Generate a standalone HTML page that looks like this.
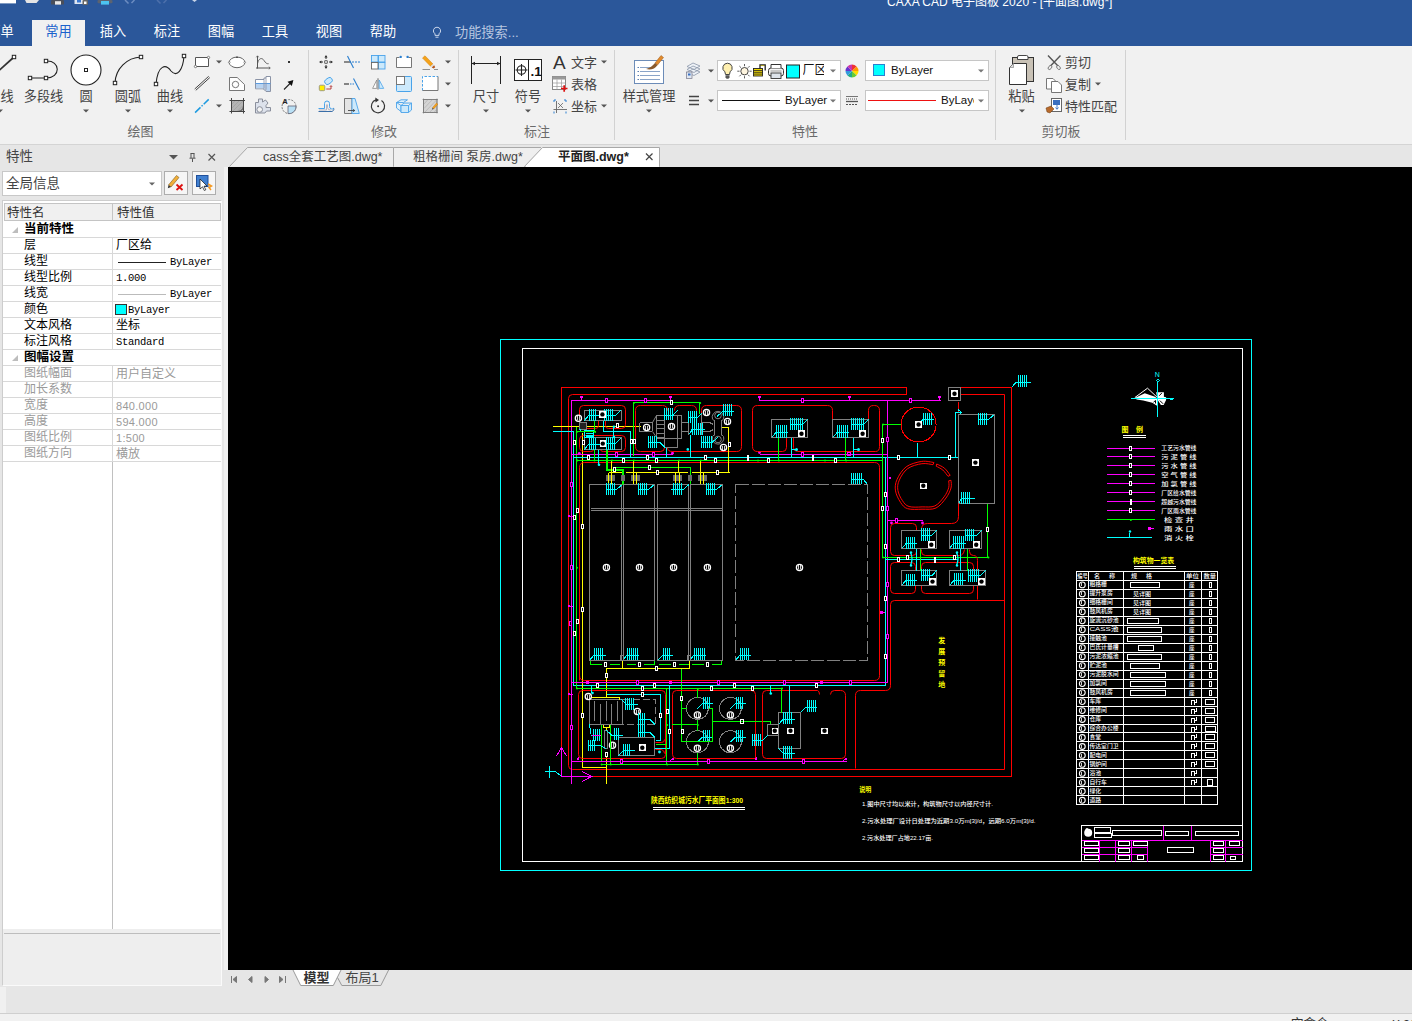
<!DOCTYPE html>
<html lang="zh"><head><meta charset="utf-8"><title>CAXA CAD</title>
<style>
*{box-sizing:border-box;margin:0;padding:0}
html,body{width:1412px;height:1021px;overflow:hidden;background:#f0f0f0;font-family:"Liberation Sans","Noto Sans CJK SC",sans-serif;font-size:13px;color:#444}
.abs{position:absolute}
#title{left:0;top:0;width:1412px;height:46px;background:#2b579a}
#ribbon{left:0;top:46px;width:1412px;height:99px;background:#f1f1f1;border-bottom:1px solid #d4d4d4}
.mtab{position:absolute;top:20px;height:26px;line-height:24px;color:#fff;font-size:13.2px;text-align:center;white-space:nowrap}
.mtab.on{background:#f1f1f1;color:#1a62cc}
.lbl{position:absolute;transform:translate(-50%,-50%);white-space:nowrap;font-size:13.2px;color:#444;line-height:1}
.glbl{position:absolute;transform:translate(-50%,-50%);white-space:nowrap;font-size:13px;color:#6a6a6a;line-height:1}
.sep{position:absolute;top:50px;width:1px;height:90px;background:#d2d2d2}
.dd{position:absolute;width:0;height:0;border-left:3px solid transparent;border-right:3px solid transparent;border-top:3px solid #555;transform:translate(-50%,-50%)}
.combo{position:absolute;background:#fff;border:1px solid #c6c6c6}
.ltx{position:absolute;white-space:nowrap;font-size:13px;color:#444;line-height:1;transform:translate(0,-50%)}
#side{left:0;top:145px;width:224px;height:842px;background:#e6e6e6}
#tabs{left:224px;top:145px;width:1188px;height:22px;background:#e6e6e6}
#canvas{left:228px;top:167px;width:1184px;height:803px;background:#000;overflow:hidden}
#btabs{left:224px;top:970px;width:1188px;height:17px;background:#e6e6e6}
#status{left:0;top:987px;width:1412px;height:26px;background:#e6e6e6}
#bottom{left:0;top:1013px;width:1412px;height:8px;background:#f1f1f1;border-top:1px solid #cfcfcf}
.row{position:absolute;left:3px;width:218px;height:16px;border-bottom:1px solid #d8d8d8;background:#fff}
.rn{position:absolute;left:21px;top:0;font-size:12px;line-height:15px;color:#000;white-space:nowrap}
.rv{position:absolute;left:113px;top:0;font-size:10.5px;line-height:16px;color:#000;white-space:nowrap;font-family:"Liberation Mono","Noto Sans CJK SC",monospace;letter-spacing:-.3px}
.row.g .rn,.row.g .rv{color:#9a9a9a}
.row.g .rv{font-family:"Liberation Sans","Noto Sans CJK SC",sans-serif;letter-spacing:.3px;font-size:11px}
.row.h .rn{left:21px;font-weight:bold;font-size:12.5px}
</style></head><body>
<div id="title" class="abs">
<svg class="abs" style="left:0;top:0" width="420" height="8"><rect x="0" y="0" width="16" height="3.400" fill="#fff"/><path d="M25 0 L39 0 L36.500 3 L26.500 3Z" fill="#e4e4e4"/><rect x="51" y="0" width="13" height="4.600" rx="1.200" fill="#4a4f5a"/><rect x="55" y="1.200" width="6" height="3.400" fill="#e8e8e8"/><rect x="74.500" y="0" width="10" height="4" fill="#dfe6f2"/><rect x="77" y="0" width="4" height="2.500" fill="#3a78d0"/><rect x="82.500" y="0" width="5.500" height="5" rx="1" fill="#666"/><rect x="84" y="1.500" width="2.500" height="2.500" fill="#fff"/><rect x="97.500" y="0" width="15" height="3.200" rx="1.200" fill="#5c6370"/><rect x="101" y="1" width="8" height="3.600" fill="#4cc3f0"/><path d="M125 0 L128.500 3.500 M134.500 0 L131.500 3" stroke="#6c8cc0" stroke-width="1.500" fill="none"/><path d="M157 0 L160.500 3.500 M166.500 0 L163.500 3" stroke="#4d70ab" stroke-width="1.500" fill="none"/><path d="M192 0 L194.500 2 L197 0Z" fill="#c8d4e8"/></svg>
<div class="abs" style="left:887px;top:-6px;color:#fff;font-size:12px;white-space:nowrap;line-height:16px;letter-spacing:0">CAXA CAD 电子图板 2020 - [平面图.dwg*]</div>
<div class="mtab" style="left:-13.5px;width:28px">菜单</div>
<div class="mtab on" style="left:32px;width:53px">常用</div>
<div class="mtab" style="left:86px;width:54px">插入</div>
<div class="mtab" style="left:140px;width:54px">标注</div>
<div class="mtab" style="left:194px;width:54px">图幅</div>
<div class="mtab" style="left:248px;width:54px">工具</div>
<div class="mtab" style="left:302px;width:54px">视图</div>
<div class="mtab" style="left:356px;width:54px">帮助</div>
<svg class="abs" style="left:430px;top:25px" width="14" height="16" viewBox="0 0 14 16"><path d="M7 2.2a3.6 3.6 0 0 0-2 6.6v1.6h4V8.800a3.600 3.600 0 0 0-2-6.600z" fill="none" stroke="#c9d5ea" stroke-width="1"/><path d="M5.500 12.200h3" stroke="#c9d5ea" stroke-width="1"/></svg>
<div class="abs" style="left:455px;top:20px;height:26px;line-height:25px;color:#b9c7e0;font-size:13.2px;white-space:nowrap">功能搜索...</div>
</div>
<div id="ribbon" class="abs"></div>
<div class="sep" style="left:308px"></div>
<div class="sep" style="left:458px"></div>
<div class="sep" style="left:614px"></div>
<div class="sep" style="left:995px"></div>
<div class="sep" style="left:1125px"></div>
<div class="lbl" style="left:0.5px;top:97px">直线</div>
<div class="lbl" style="left:43.5px;top:97px">多段线</div>
<div class="lbl" style="left:86px;top:97px">圆</div>
<div class="lbl" style="left:128px;top:97px">圆弧</div>
<div class="lbl" style="left:170px;top:97px">曲线</div>
<div class="lbl" style="left:486px;top:97px">尺寸</div>
<div class="lbl" style="left:528px;top:97px">符号</div>
<div class="lbl" style="left:649px;top:97px">样式管理</div>
<div class="lbl" style="left:1021.5px;top:97px">粘贴</div>
<div class="dd" style="left:0px;top:110.500px"></div>
<div class="dd" style="left:86px;top:110.500px"></div>
<div class="dd" style="left:128px;top:110.500px"></div>
<div class="dd" style="left:170px;top:110.500px"></div>
<div class="dd" style="left:486px;top:110.500px"></div>
<div class="dd" style="left:528px;top:110.500px"></div>
<div class="dd" style="left:649px;top:110.500px"></div>
<div class="dd" style="left:1021.5px;top:110.500px"></div>
<div class="glbl" style="left:140.5px;top:131px">绘图</div>
<div class="glbl" style="left:384px;top:131px">修改</div>
<div class="glbl" style="left:537px;top:131px">标注</div>
<div class="glbl" style="left:805px;top:131px">特性</div>
<div class="glbl" style="left:1061px;top:131px">剪切板</div>
<div class="dd" style="left:219px;top:61.5px"></div>
<div class="dd" style="left:219px;top:105.5px"></div>
<div class="dd" style="left:447.5px;top:61.5px"></div>
<div class="dd" style="left:447.5px;top:83.5px"></div>
<div class="dd" style="left:447.5px;top:105.5px"></div>
<div class="dd" style="left:604px;top:61.5px"></div>
<div class="dd" style="left:604px;top:105.5px"></div>
<div class="dd" style="left:711px;top:70.5px"></div>
<div class="dd" style="left:711px;top:100.5px"></div>
<div class="dd" style="left:1098px;top:83.5px"></div>
<div class="ltx" style="left:571px;top:61.5px">文字</div>
<div class="ltx" style="left:571px;top:83.5px">表格</div>
<div class="ltx" style="left:571px;top:105.5px">坐标</div>
<div class="ltx" style="left:1065px;top:61.5px">剪切</div>
<div class="ltx" style="left:1065px;top:83.5px">复制</div>
<div class="ltx" style="left:1065px;top:105.5px">特性匹配</div>
<div class="combo" style="left:717px;top:60px;width:124px;height:21px"></div>
<div class="combo" style="left:717px;top:90px;width:124px;height:21px"></div>
<div class="combo" style="left:865px;top:60px;width:124px;height:21px"></div>
<div class="combo" style="left:865px;top:90px;width:124px;height:21px"></div>
<div class="ltx" style="left:785px;top:100.500px;color:#111;font-size:11.500px">ByLayer</div>
<div class="ltx" style="left:891px;top:70.500px;color:#111;font-size:11.500px">ByLayer</div>
<div class="ltx" style="left:941px;top:100.500px;color:#111;font-size:11.500px;width:33px;overflow:hidden">ByLayer</div>
<div class="ltx" style="left:802.500px;top:70px;color:#111;font-size:12px;width:21px;overflow:hidden;letter-spacing:0">厂区</div>
<div class="dd" style="left:833px;top:70.5px;border-top-color:#777"></div>
<div class="dd" style="left:833px;top:100.5px;border-top-color:#777"></div>
<div class="dd" style="left:981px;top:70.5px;border-top-color:#777"></div>
<div class="dd" style="left:981px;top:100.5px;border-top-color:#777"></div>
<svg class="abs" style="left:0;top:46px" width="1412" height="98" viewBox="0 46 1412 98" fill="none" stroke-linecap="butt">
<path d="M-2 71.500 L14 57" stroke="#333" stroke-width="1.700"/><rect x="12.3" y="55.3" width="3.4" height="3.4" fill="#fff" stroke="#222" stroke-width="1"/>
<path d="M30 78 L46 78 M46 61 C61 60 61 78.500 46 78" stroke="#222" stroke-width="1.1"/><rect x="28.3" y="76.3" width="3.4" height="3.4" fill="#fff" stroke="#222" stroke-width="1"/><rect x="44.3" y="76.3" width="3.4" height="3.4" fill="#fff" stroke="#222" stroke-width="1"/><rect x="44.3" y="59.3" width="3.4" height="3.4" fill="#fff" stroke="#222" stroke-width="1"/>
<circle cx="86" cy="70" r="15" stroke="#222" stroke-width="1.1" fill="#fff"/><rect x="84.5" y="68.5" width="3" height="3" fill="#fff" stroke="#222" stroke-width="1"/>
<path d="M115 83 A27 27 0 0 1 141 57" stroke="#222" stroke-width="1.1"/><rect x="113.3" y="81.3" width="3.4" height="3.4" fill="#fff" stroke="#222" stroke-width="1"/><rect x="139.3" y="55.3" width="3.4" height="3.4" fill="#fff" stroke="#222" stroke-width="1"/>
<path d="M156 84 C158 64 166 64 171 71 C177 78 183 70 184 56" stroke="#222" stroke-width="1.1"/><rect x="154.3" y="82.3" width="3.4" height="3.4" fill="#fff" stroke="#222" stroke-width="1"/><rect x="182.3" y="54.3" width="3.4" height="3.4" fill="#fff" stroke="#222" stroke-width="1"/>
<path d="M195.500 57.500 H208.500 V66.500 H195.500Z" stroke="#555" stroke-width="1" fill="#fff"/><circle cx="208.500" cy="57.500" r="1.200" fill="#fff" stroke="#555" stroke-width=".7"/><circle cx="195.500" cy="66.500" r="1.200" fill="#fff" stroke="#555" stroke-width=".7"/>
<path d="M194.700 89 L208.700 76.300 M195.800 90.300 L209.800 77.600" stroke="#444" stroke-width="1"/>
<path d="M195.100 112.600 L208.700 99.400" stroke="#1e9be0" stroke-width="1.500" stroke-dasharray="7.500 1.500 1.500 1.500"/>
<ellipse cx="237" cy="62.400" rx="7.800" ry="5.300" stroke="#555" stroke-width=".9" fill="#fff"/><circle cx="229.300" cy="62.400" r=".9" fill="#fff" stroke="#555" stroke-width=".5"/><circle cx="244.700" cy="62.400" r=".9" fill="#fff" stroke="#555" stroke-width=".5"/><rect x="236.200" y="56.600" width="1.600" height="1.400" fill="#444"/>
<path d="M229.500 77.500 H237.200 L244.500 84.500 V90.500 H229.500Z" stroke="#777" stroke-width="1" fill="#fff"/><circle cx="235.500" cy="84.500" r="3.200" stroke="#777" stroke-width="1"/>
<rect x="231.500" y="100.500" width="11.500" height="11" fill="#b4b4b4" stroke="none"/><path d="M232 104 L235.500 100.500 M232 108 L239.500 100.500 M233 111 L243 101 M237 111.500 L243 105.500" stroke="#9a9a9a" stroke-width=".6"/><path d="M229.500 100.500 H245 M229.500 111.500 H245 M231.500 98 V113.500 M243.500 98 V113.500" stroke="#444" stroke-width="1"/><path d="M238 111.500 A6 6 0 0 0 243.500 106" stroke="#444" stroke-width="1"/>
<path d="M257.500 56 V68.500 M256 68 H270" stroke="#555" stroke-width="1"/><path d="M257.500 63.700 C258.500 58 262 57.200 264 60.500 C265.500 63 267 64 268.600 63.700" stroke="#555" stroke-width=".9"/><path d="M256.300 57.300 L257.500 55.800 L258.700 57.300 M268.800 66.800 L270.300 68 L268.800 69.200" stroke="#555" stroke-width=".8"/>
<path d="M255.500 79.500 H264 V78 H266 V76.500 H270.500 V91.500 H266 V90 H264 V88.800 H255.500Z" fill="#fff" stroke="#8a93a6" stroke-width="1"/><path d="M256 84 H270 V91 H266.500 V89.500 H264.500 V88.300 H256Z" fill="#b9d3f0" stroke="none"/><path d="M255.500 83.500 H270.500" stroke="#5a9be0" stroke-width="1"/><path d="M264 79.500 V88.800 M266 78 V90" stroke="#8a93a6" stroke-width=".8"/>
<path d="M255.500 113 V102.500 H258.500 V99 H262.500 V102 L265.500 100 L268 103 L266 105.500 V107.500 H270.500 V111 H266.500 L265 113Z" fill="#dde2ec" stroke="#8a8f9c" stroke-width="1"/><circle cx="259.700" cy="109.500" r="2.800" fill="#f4f4f4" stroke="#8a8f9c" stroke-width="1"/>
<rect x="288" y="61" width="2" height="2" fill="#333"/>
<path d="M284 89.500 L290 83.500" stroke="#222" stroke-width="1.100"/><path d="M293.400 80.100 L291.800 86 L287.500 81.700Z" fill="#111"/>
<circle cx="289" cy="106.600" r="7" stroke="#555" stroke-width=".8" stroke-dasharray="2 1.200"/><path d="M288 106 H296 A7 7 0 0 1 288 113.600Z" fill="#b9e0f5" stroke="#667" stroke-width=".8"/>
<text x="282.300" y="104" font-size="7.500" font-weight="bold" fill="#222" stroke="none" font-family="Liberation Sans, sans-serif">A</text>
<path d="M326 56 V68 M320 62 H332" stroke="#333" stroke-width="1" stroke-dasharray="3 1.500"/><path d="M326 55 l-1.600 2.400 h3.200z M326 69 l-1.600 -2.400 h3.200z M319 62 l2.400 -1.600 v3.200z M333 62 l-2.400 -1.600 v3.200z" fill="#333"/><rect x="324.800" y="60.800" width="2.400" height="2.400" fill="#fff" stroke="#333" stroke-width=".7"/>
<path d="M344 62 H351" stroke="#333" stroke-width="1.1"/><path d="M352 62 H360" stroke="#2a7fd0" stroke-width="1" stroke-dasharray="2 1"/><path d="M347.500 56 L353.500 68" stroke="#2a7fd0" stroke-width="1.100"/>
<rect x="371.500" y="55.500" width="6.500" height="6.500" fill="#cce9fb" stroke="#49a3ea" stroke-width=".9"/><rect x="378.500" y="55.500" width="6.500" height="6.500" fill="#cce9fb" stroke="#49a3ea" stroke-width=".9"/><rect x="378.500" y="62.500" width="6.500" height="6.500" fill="#cce9fb" stroke="#49a3ea" stroke-width=".9"/><rect x="371.500" y="62.500" width="6.500" height="6.500" fill="#fff" stroke="#666" stroke-width=".9"/>
<path d="M396.500 57.500 H411.500 V67.500 H396.500Z" stroke="#777" stroke-width="1" fill="#fff"/><path d="M399.500 57.500 H408.500" stroke="#fff" stroke-width="1.400"/><circle cx="400.700" cy="56.900" r="1.200" fill="#2a7fd0"/><circle cx="407.600" cy="56.900" r="1.200" fill="#2a7fd0"/>
<path d="M422.500 58 L425 55.800 L433 64 L430.500 66.200Z" fill="#f5a31a" stroke="#d08010" stroke-width=".5"/><path d="M430.500 66.200 L433 64 L434.200 65.300 L431.800 67.500Z" fill="#ddd"/><path d="M431.800 67.500 L434.200 65.300 L435.200 67.200 L433.600 68.600Z" fill="#b5551a"/><path d="M422.500 69.500 H430 M434 69.500 H438" stroke="#777" stroke-width=".8"/>
<rect x="324.500" y="78.300" width="8" height="5.400" rx="2.500" transform="rotate(-35 328.500 81)" fill="#cce9fb" stroke="#49a3ea" stroke-width=".9"/><rect x="319.300" y="85.200" width="5.500" height="5.500" rx="1.200" fill="#ffee00" stroke="#888" stroke-width=".8"/><path d="M326.300 89 H331 V86.300" stroke="#b03030" stroke-width=".9"/><path d="M329.800 87 L331 85.500 L332.200 87" stroke="#b03030" stroke-width=".8"/>
<path d="M344 84 H349" stroke="#555" stroke-width="1.400"/><path d="M350 84 H354.500" stroke="#2a7fd0" stroke-width="1.200" stroke-dasharray="1.500 1"/><path d="M353.500 78.500 L359.500 90" stroke="#2a7fd0" stroke-width="1.100"/>
<path d="M372.600 88.400 H376.800 V80Z" fill="#fff" stroke="#888" stroke-width=".8"/><rect x="377" y="78.300" width="2" height="11.200" fill="#aaa"/><path d="M379.200 80 V88.400 H383.700Z" fill="#cce9fb" stroke="#49a3ea" stroke-width=".8"/>
<rect x="396.500" y="76.500" width="15" height="15" rx="1" fill="#cde9fb" stroke="#49a3ea" stroke-width="1"/><rect x="396.500" y="76.500" width="8" height="8" fill="#fff" stroke="#777" stroke-width="1"/>
<rect x="422.500" y="76.500" width="15.500" height="14" fill="#fff" stroke="none"/><path d="M422.500 90.500 V76.500 H438" stroke="#49a3ea" stroke-width="1" stroke-dasharray="2.500 1.500"/><path d="M438 76.500 V90.500 H422.500" stroke="#777" stroke-width="1"/>
<path d="M318.500 108.500 H324.500 V103.500 a2.500 2.500 0 0 1 5 0 V106.500 a2.500 2.500 0 0 0 4.500 1.500" stroke="#49a3ea" stroke-width="1"/><path d="M318.500 111.500 H331 a2.500 2.500 0 0 0 2.800 -3" stroke="#3a6ea8" stroke-width="1"/><path d="M319 110 H326.500 V104.500 M327.500 104.500 V107.500 a3 3 0 0 0 3.500 2.500" stroke="#aab" stroke-width=".8"/>
<path d="M344.500 98.500 H352 V113.500 H344.500Z" fill="#e4e4e4" stroke="#777" stroke-width="1"/><path d="M352 98.500 H355 L359.300 113.500 H352Z" fill="#cde9fb" stroke="#49a3ea" stroke-width=".9"/><path d="M348 110.500 H354.500 M353 109.300 L354.800 110.500 L353 111.700" stroke="#333" stroke-width=".8"/>
<path d="M381.500 100.600 A6.600 6.600 0 1 1 376 99.900" stroke="#333" stroke-width="1.200"/><path d="M375.300 97.600 L379 100 L375.500 102.500Z" fill="#333"/><circle cx="378.100" cy="106.300" r="1" fill="#333"/>
<path d="M396.500 102.500 L401 99.800 H407.500 L403.500 102.500Z M396.500 102.500 V108 L401 111.500 V105.500Z" fill="#dff0fb" stroke="#49a3ea" stroke-width=".9"/><path d="M401 105.500 H408.500 V112.500 H401Z M408.500 105.500 L411.500 103 V110 L408.500 112.500 M401 105.500 L404 103 H411.500" fill="#cde9fb" stroke="#49a3ea" stroke-width=".9"/>
<rect x="423.500" y="99.500" width="13.500" height="13" fill="#d4d4d4" stroke="#777" stroke-width=".8"/><path d="M424 104 L428 99.500 M424 108.500 L432.500 99.500 M425 112 L436.500 100 M429.500 112.500 L437 104.500 M434 112.500 L437 109" stroke="#aaa" stroke-width=".6"/><path d="M422.500 99.500 H438 M422.500 112.500 H438 M423.500 98.500 V113.500 M437 98.500 V113.500" stroke="#777" stroke-width=".6"/><path d="M432.500 107.700 L436.500 103 L437.800 104.200 L433.800 108.900Z" fill="#f5a31a" stroke="#c07010" stroke-width=".4"/><path d="M432.500 107.700 L433.800 108.900 L432 109.500Z" fill="#444"/>
<path d="M471.500 56 V84 M500.500 56 V84 M471.500 63.500 H500.500" stroke="#222" stroke-width="1"/><path d="M471.500 63.500 l3.500 -1.800 v3.600z M500.500 63.500 l-3.500 -1.800 v3.600z" fill="#222"/>
<rect x="514.500" y="59.500" width="27" height="21" fill="#fff" stroke="#222" stroke-width="1"/><path d="M528.500 59.500 V80.500" stroke="#222" stroke-width="1"/><circle cx="521.500" cy="70" r="4.300" stroke="#222" stroke-width="1.100"/><path d="M515.500 70 H527.500 M521.500 64 V76" stroke="#222" stroke-width="1.100"/>
<text x="530.500" y="75.500" font-size="13.500" font-weight="bold" fill="#111" stroke="none" font-family="Liberation Sans, sans-serif">.1</text>
<text x="553" y="68.500" font-size="19" fill="#333" stroke="none" font-family="Liberation Sans, sans-serif">A</text>
<rect x="552.500" y="76.500" width="13" height="13" fill="#fff" stroke="#888" stroke-width="1"/><rect x="552.500" y="76.500" width="13" height="3" fill="#999"/><path d="M552.500 83 H565.500 M552.500 86.500 H565.500 M557 79.500 V89.500 M561.500 79.500 V89.500" stroke="#999" stroke-width=".7"/><path d="M561 88.500 H567.500 M564.200 85.200 V91.800" stroke="#d11" stroke-width="1.700"/>
<path d="M556.500 101 V113 M553.500 109.500 H567" stroke="#666" stroke-width=".9"/><path d="M554 100 V103 M554 100 H556.500 M566 100 H563.500 M566 100 V103 M554 113.500 V110.500 M566 113.500 V111" stroke="#2a7fd0" stroke-width="1" stroke-dasharray="2 1"/><path d="M558 103 L563 108 M563 103 L558 108" stroke="#666" stroke-width=".8"/>
<rect x="634.500" y="60.500" width="29" height="23" fill="#fff" stroke="#6c8cb8" stroke-width="1"/><path d="M640 67.500 H652 M640 71.500 H660 M640 75.500 H660 M640 79.500 H660" stroke="#8aa4c8" stroke-width="1"/><path d="M637.500 67.500 h1.500 M637.500 71.500 h1.500 M637.500 75.500 h1.500 M637.500 79.500 h1.500" stroke="#5b7fb0" stroke-width="1.200"/><path d="M655 63 L661 55.500 L663.500 57.500 L657.500 65Z" fill="#e08a2c" stroke="#9a5513" stroke-width=".5"/><path d="M655 63 L657.500 65 C655 69.500 650 70 646 69 C650 68 652.500 66 655 63Z" fill="#8a5a2c"/>
<path d="M687 72.500 L693 69 L700 72 L694 75.500Z M687 69.500 L693 66 L700 69 L694 72.500Z M687 66.500 L693 63 L700 66 L694 69.500Z" fill="#eef2f7" stroke="#8a96a8" stroke-width=".8"/><rect x="686.500" y="72" width="5.500" height="6.500" fill="#dfe7f2" stroke="#778" stroke-width=".7"/><rect x="688" y="73.500" width="2.500" height="2" fill="#3a6fc0"/>
<path d="M689 96.500 H699 M689 100.500 H699 M689 104.500 H699" stroke="#444" stroke-width="1.300"/>
<path d="M727.500 63.200 a4.700 4.700 0 0 1 2.600 8.600 l-.6 2.700 h-4 l-.6 -2.700 a4.700 4.700 0 0 1 2.600 -8.600z" fill="#fff0b0" stroke="#444" stroke-width="1"/><path d="M725.500 75.200 h4 v2 l-1 1.500 h-2 l-1 -1.500z" fill="#555"/>
<circle cx="744.500" cy="71.200" r="3.700" fill="#fff6e0" stroke="#333" stroke-width=".9"/><path d="M744.500 64 v2.200 M744.500 76.200 v2.200 M737.300 71.200 h2.200 M749.500 71.200 h2.200 M739.400 66.100 l1.600 1.600 M748 74.700 l1.600 1.600 M749.600 66.100 l-1.600 1.600 M741 74.700 l-1.600 1.600" stroke="#333" stroke-width=".8"/>
<rect x="753.500" y="68.500" width="9" height="7.500" fill="#f0d800" stroke="#222" stroke-width=".9"/><path d="M753.500 70.500 h9 M753.500 72.300 h9 M753.500 74.100 h9" stroke="#222" stroke-width=".8"/><path d="M760 68.500 V65 h5.200 V70.500" stroke="#222" stroke-width="1.300"/><path d="M760.700 65.600 h3.800" stroke="#f0d800" stroke-width=".6"/>
<rect x="768.500" y="68" width="15" height="8" rx="2.500" fill="#f4f4f4" stroke="#333" stroke-width="1"/><path d="M771 68 V64.500 H781 V68" fill="#fff" stroke="#333" stroke-width="1"/><rect x="771" y="73" width="10" height="5.500" fill="#dde3ea" stroke="#333" stroke-width=".9"/><path d="M770.500 71 H781.500" stroke="#888" stroke-width=".8"/>
<rect x="786.500" y="65" width="13" height="13" fill="#00ffff" stroke="#222" stroke-width="1"/>
<path d="M852 71 L852.00 64.50 A6.5 6.5 0 0 1 856.60 66.40Z" fill="#e33"/>
<path d="M852 71 L856.60 66.40 A6.5 6.5 0 0 1 858.50 71.00Z" fill="#f90"/>
<path d="M852 71 L858.50 71.00 A6.5 6.5 0 0 1 856.60 75.60Z" fill="#fd0"/>
<path d="M852 71 L856.60 75.60 A6.5 6.5 0 0 1 852.00 77.50Z" fill="#6c3"/>
<path d="M852 71 L852.00 77.50 A6.5 6.5 0 0 1 847.40 75.60Z" fill="#2a8"/>
<path d="M852 71 L847.40 75.60 A6.5 6.5 0 0 1 845.50 71.00Z" fill="#39d"/>
<path d="M852 71 L845.50 71.00 A6.5 6.5 0 0 1 847.40 66.40Z" fill="#63c"/>
<path d="M852 71 L847.40 66.40 A6.5 6.5 0 0 1 852.00 64.50Z" fill="#c3a"/>
<path d="M846 96.500 H858" stroke="#555" stroke-width=".8"/><path d="M846 99 H858" stroke="#555" stroke-width="1" stroke-dasharray="1 1"/><path d="M846 101.500 H858" stroke="#555" stroke-width="1.300"/><path d="M846 104.500 H858" stroke="#555" stroke-width="1" stroke-dasharray="2 1"/>
<path d="M722 100.500 H780" stroke="#111" stroke-width="1"/>
<path d="M868 100.500 H936" stroke="#e11" stroke-width="1"/>
<rect x="873.500" y="64.500" width="11" height="11" fill="#00ffff" stroke="#2a7fd0" stroke-width="1"/>
<rect x="1012.500" y="57.500" width="21" height="24" fill="#c9c2b6" stroke="#333" stroke-width="1"/><path d="M1017.500 59.500 V57 Q1017.500 55.500 1019 55.500 H1026.500 Q1028 55.500 1028 57 V59.500Z" fill="#fff" stroke="#333" stroke-width=".9"/><path d="M1009.500 67.500 L1013.500 63.500 H1026.500 V84.500 H1009.500Z" fill="#fff" stroke="#333" stroke-width="1"/><path d="M1009.500 67.500 H1013.500 V63.500Z" fill="#ddd" stroke="#777" stroke-width=".6"/>
<path d="M1048 55.500 L1058.500 66.500 M1060.500 55.500 L1050 66.500" stroke="#555" stroke-width="1.400"/><ellipse cx="1050" cy="67.500" rx="1.500" ry="2.300" transform="rotate(40 1050 67.500)" fill="#eee" stroke="#666" stroke-width=".8"/><ellipse cx="1058.500" cy="67.500" rx="1.500" ry="2.300" transform="rotate(-40 1058.500 67.500)" fill="#eee" stroke="#666" stroke-width=".8"/>
<path d="M1046.500 78.500 H1053 L1056 81.500 V89 H1046.500Z" fill="#fff" stroke="#777" stroke-width="1"/><path d="M1051.500 81.500 H1058 L1061.500 85 V92.500 H1051.500Z" fill="#fff" stroke="#777" stroke-width="1"/>
<rect x="1051.500" y="98.500" width="10" height="13" fill="#fff" stroke="#666" stroke-width="1"/><rect x="1053" y="100" width="7" height="5" fill="#3a6fc0"/><path d="M1057 105 v4 M1055.500 107.500 l1.500 1.800 l1.500 -1.800" stroke="#3a6fc0" stroke-width=".9"/><path d="M1046 108 L1051 106 L1054 109 L1050 113 L1047 112Z" fill="#b86a2c" stroke="#6a3a10" stroke-width=".5"/>
</svg>
<div id="side" class="abs"></div>
<div class="abs" style="left:224px;top:145px;width:4px;height:842px;background:#f0f0f0"></div>
<div class="abs" style="left:6px;top:149px;font-size:13.500px;line-height:16px;color:#444">特性</div>
<svg class="abs" style="left:165px;top:150px" width="56" height="14" viewBox="165 150 56 14" fill="none"><path d="M169 155 H178 L173.500 159.500Z" fill="#555"/><path d="M190.500 153.500 H194.500 M191 153.500 V158 M194 153.500 V158 M189.500 158.200 H195.500 M192.500 158.500 V162" stroke="#555" stroke-width="1"/><path d="M208.500 154 L215 160.500 M215 154 L208.500 160.500" stroke="#555" stroke-width="1.200"/></svg>
<div class="abs" style="left:2px;top:171px;width:160px;height:25px;background:#fff;border:1px solid #c8c8c8"></div>
<div class="abs" style="left:6px;top:176px;font-size:13.500px;line-height:16px;color:#444">全局信息</div>
<div class="dd" style="left:151.500px;top:184px;border-top-color:#666"></div>
<div class="abs" style="left:164px;top:171px;width:24px;height:24px;background:#f6f6f6;border:1px solid #adadad"></div>
<div class="abs" style="left:192px;top:171px;width:24px;height:24px;background:#f6f6f6;border:1px solid #adadad"></div>
<svg class="abs" style="left:164px;top:171px" width="52" height="24" viewBox="164 171 52 24" fill="none"><path d="M168.500 185 L176.500 175.500 L179 177.500 L171 187Z" fill="#f2b03a" stroke="#7a5a20" stroke-width=".6"/><path d="M168.500 185 L171 187 L167.800 188.200Z" fill="#333"/><path d="M176.500 184.500 L182.500 190 M182.500 184.500 L176.500 190" stroke="#d11" stroke-width="1.800"/><rect x="196.500" y="175.500" width="11.500" height="11" fill="#3f7fd0" stroke="#1f4f9a" stroke-width="1"/><path d="M200 179 V189 L202.500 186.800 L204.300 190.500 L205.800 189.800 L204 186.200 L207 186Z" fill="#fff" stroke="#111" stroke-width=".7"/><path d="M208 184 L211.500 186 L209 187.500 L211 190" stroke="#f59a23" stroke-width="1.500"/></svg>
<div class="abs" style="left:2px;top:200px;width:220px;height:786px;background:#fff;border:1px solid #cdcdcd;border-right-color:#fafafa;border-bottom-color:#fafafa"></div>
<div class="abs" style="left:3px;top:929px;width:218px;height:56px;background:#eeeeee"></div>
<div class="abs" style="left:4px;top:933px;width:216px;height:1px;background:#bdbdbd"></div>
<div class="abs" style="left:4px;top:203px;width:109px;height:18px;background:#f0f0f0;border:1px solid #c4c4c4"></div>
<div class="abs" style="left:113px;top:203px;width:108px;height:18px;background:#f0f0f0;border:1px solid #c4c4c4;border-left:none"></div>
<div class="abs" style="left:7px;top:205px;font-size:12.500px;line-height:16px;color:#333">特性名</div>
<div class="abs" style="left:117px;top:205px;font-size:12.500px;line-height:16px;color:#333">特性值</div>
<div class="row h" style="top:222px">
<svg class="abs" style="left:8px;top:4px" width="8" height="8"><path d="M1 7 H7 V1Z" fill="#bdbdbd"/></svg>
<div class="rn">当前特性</div>
</div>
<div class="row " style="top:238px">
<div class="rn">层</div>
<div class="rv" style="font-size:12px;letter-spacing:0">厂区给</div>
<div class="abs" style="left:109px;top:0;width:1px;height:16px;background:#d8d8d8"></div>
</div>
<div class="row " style="top:254px">
<div class="rn">线型</div>
<div class="abs" style="left:115px;top:8px;width:48px;height:1px;background:#222"></div><div class="rv" style="left:167px">ByLayer</div>
<div class="abs" style="left:109px;top:0;width:1px;height:16px;background:#d8d8d8"></div>
</div>
<div class="row " style="top:270px">
<div class="rn">线型比例</div>
<div class="rv">1.000</div>
<div class="abs" style="left:109px;top:0;width:1px;height:16px;background:#d8d8d8"></div>
</div>
<div class="row " style="top:286px">
<div class="rn">线宽</div>
<div class="abs" style="left:115px;top:8px;width:48px;height:1px;background:#bbb"></div><div class="rv" style="left:167px">ByLayer</div>
<div class="abs" style="left:109px;top:0;width:1px;height:16px;background:#d8d8d8"></div>
</div>
<div class="row " style="top:302px">
<div class="rn">颜色</div>
<div class="abs" style="left:112px;top:2px;width:12px;height:11px;background:#00ffff;border:1px solid #333"></div><div class="rv" style="left:125px">ByLayer</div>
<div class="abs" style="left:109px;top:0;width:1px;height:16px;background:#d8d8d8"></div>
</div>
<div class="row " style="top:318px">
<div class="rn">文本风格</div>
<div class="rv" style="font-size:12px;letter-spacing:0">坐标</div>
<div class="abs" style="left:109px;top:0;width:1px;height:16px;background:#d8d8d8"></div>
</div>
<div class="row " style="top:334px">
<div class="rn">标注风格</div>
<div class="rv">Standard</div>
<div class="abs" style="left:109px;top:0;width:1px;height:16px;background:#d8d8d8"></div>
</div>
<div class="row h" style="top:350px">
<svg class="abs" style="left:8px;top:4px" width="8" height="8"><path d="M1 7 H7 V1Z" fill="#bdbdbd"/></svg>
<div class="rn">图幅设置</div>
</div>
<div class="row g" style="top:366px">
<div class="rn">图纸幅面</div>
<div class="rv" style="font-size:12px;letter-spacing:0">用户自定义</div>
<div class="abs" style="left:109px;top:0;width:1px;height:16px;background:#d8d8d8"></div>
</div>
<div class="row g" style="top:382px">
<div class="rn">加长系数</div>
<div class="abs" style="left:109px;top:0;width:1px;height:16px;background:#d8d8d8"></div>
</div>
<div class="row g" style="top:398px">
<div class="rn">宽度</div>
<div class="rv">840.000</div>
<div class="abs" style="left:109px;top:0;width:1px;height:16px;background:#d8d8d8"></div>
</div>
<div class="row g" style="top:414px">
<div class="rn">高度</div>
<div class="rv">594.000</div>
<div class="abs" style="left:109px;top:0;width:1px;height:16px;background:#d8d8d8"></div>
</div>
<div class="row g" style="top:430px">
<div class="rn">图纸比例</div>
<div class="rv">1:500</div>
<div class="abs" style="left:109px;top:0;width:1px;height:16px;background:#d8d8d8"></div>
</div>
<div class="row g" style="top:446px">
<div class="rn">图纸方向</div>
<div class="rv" style="font-size:12px;letter-spacing:0">横放</div>
<div class="abs" style="left:109px;top:0;width:1px;height:16px;background:#d8d8d8"></div>
</div>
<div class="abs" style="left:112px;top:462px;width:1px;height:467px;background:#c0c0c0"></div>
<div id="tabs" class="abs"></div>
<svg class="abs" style="left:224px;top:145px" width="460" height="22" viewBox="224 145 460 22" fill="none"><path d="M229.500 166.500 L247.500 147.500 H393.500 V166.500" fill="#efefef" stroke="#a8a8a8" stroke-width="1"/><path d="M393.500 166.500 V147.500 H541 " fill="#efefef" stroke="#a8a8a8" stroke-width="1"/><path d="M394 148 H541 L524 166.500 H394Z" fill="#efefef"/><path d="M524.500 166.500 L542.500 147.500 H659.500 V166.500Z" fill="#fff" stroke="#a8a8a8" stroke-width="1"/><path d="M525.500 166.500 H659" stroke="#fff" stroke-width="1.500"/><path d="M646 153.500 L652.500 160 M652.500 153.500 L646 160" stroke="#444" stroke-width="1.200"/></svg>
<div class="abs" style="left:263px;top:149px;font-size:12.500px;line-height:17px;color:#444;white-space:nowrap">cass全套工艺图.dwg*</div>
<div class="abs" style="left:413px;top:149px;font-size:12.500px;line-height:17px;color:#444;white-space:nowrap">粗格栅间 泵房.dwg*</div>
<div class="abs" style="left:558px;top:149px;font-size:12.500px;line-height:17px;color:#222;white-space:nowrap;font-weight:bold">平面图.dwg*</div>
<div id="btabs" class="abs"></div>
<svg class="abs" style="left:228px;top:970px" width="170" height="18" viewBox="228 970 170 18" fill="none"><path d="M231.500 976 V983 M236.500 976.500 L233 979.500 L236.500 982.500Z M252 976.500 L248.500 979.500 L252 982.500Z M265 976.500 L268.500 979.500 L265 982.500Z M279.500 976.500 L283 979.500 L279.500 982.500Z M285.500 976 V983" stroke="#777" stroke-width="1" fill="#777"/><path d="M293 970 L300.700 985.500 H333.300 L341 970Z" fill="#fff" stroke="none"/><path d="M293 970 L300.700 985.500 H333.300 L341 970 M337.500 977.500 L341.800 985.500 H380.800 L388.600 970" stroke="#9a9a9a" stroke-width="1"/></svg>
<div class="abs" style="left:303.500px;top:970px;font-size:13px;line-height:16px;color:#333;font-weight:bold;white-space:nowrap">模型</div>
<div class="abs" style="left:345.500px;top:970px;font-size:13px;line-height:16px;color:#444;white-space:nowrap">布局1</div>
<div id="status" class="abs"></div>
<div class="abs" style="left:0;top:987px;width:6px;height:26px;background:#f0f0f0"></div>
<div id="bottom" class="abs"></div>
<div class="abs" style="left:-4px;top:1017px;font-size:12px;color:#333;line-height:14px">◔</div>
<div class="abs" style="left:1291px;top:1017px;font-size:12.500px;color:#333;line-height:14px;white-space:nowrap">空命令</div>
<div class="abs" style="left:1392px;top:1018px;font-size:12px;color:#333;line-height:14px;white-space:nowrap">X:32</div>
<div id="canvas" class="abs"><svg class="abs" style="left:0;top:0" width="1184" height="802" viewBox="228 167 1184 802" fill="none" shape-rendering="crispEdges" font-family="Liberation Sans, Noto Sans CJK SC, sans-serif"><g id="frames">
<rect x="500.5" y="339.5" width="751" height="531" stroke="#00ffff" stroke-width="1" fill="none"/>
<rect x="522.5" y="348.5" width="720" height="513" stroke="#ffffff" stroke-width="1" fill="none"/>
</g>
<g id="boundary">
<path d="M906.5 394.5L906.5 387.5L561.5 387.5L561.5 776.5L1011.5 776.5L1011.5 387.5L960.5 387.5" stroke="#ff0000" stroke-width="1"/>
<path d="M906.5 394.5H572.5Q568.5 394.5 568.5 398.5V765.500Q568.5 769.5 572.5 769.5H1004.5V394.5H960.5" stroke="#ff0000" stroke-width="1" shape-rendering="geometricPrecision"/>
<rect x="948.5" y="387.5" width="12" height="13" stroke="#808080" stroke-width="1" fill="none"/>
<rect x="951.2" y="390.4" width="6.600" height="6.600" fill="#ffffff" stroke="none"/><circle shape-rendering="geometricPrecision" cx="954.5" cy="393.7" r="2.200" fill="#000" stroke="none"/>
<path d="M958.5 401.5L958.5 412.5" stroke="#ff0000" stroke-width="1"/>
</g>
<g id="left_bundle">
<path d="M671.5 400.5L571.5 400.5L571.5 783.5" stroke="#ff00ff" stroke-width="1"/>
<path d="M581.5 395.5L581.5 400.5" stroke="#ff00ff" stroke-width="1"/>
<rect x="580" y="395.5" width="3" height="2" fill="#ff00ff" stroke="none"/>
<path d="M670.5 395.5L670.5 400.5" stroke="#ff00ff" stroke-width="1"/>
<rect x="669" y="395.5" width="3" height="2" fill="#ff00ff" stroke="none"/>
<path d="M552.5 431.5L573.5 431.5L573.5 685.5L885.5 685.5L885.5 457.5" stroke="#00ffff" stroke-width="1"/>
<path d="M576.5 426.5L576.5 688.5" stroke="#00ff00" stroke-width="1"/>
<path d="M552.5 426.5L640.5 426.5" stroke="#ffff00" stroke-width="1"/>
<path d="M582.5 432.5L582.5 767.5L606.5 767.5" stroke="#ffff00" stroke-width="1"/>
<path d="M606.5 756.5L606.5 783.5" stroke="#ffff00" stroke-width="1"/>
<path d="M579.5 680.5V467.500Q579.5 462.5 584.5 462.5H874.5Q879.5 462.5 879.5 467.500V675.500Q879.5 680.5 874.5 680.5H584.5Q579.5 680.5 579.5 675.5" stroke="#ff0000" stroke-width="1" shape-rendering="geometricPrecision"/>
<path d="M571.5 454.5L672.5 454.5" stroke="#ff00ff" stroke-width="1"/>
<circle shape-rendering="geometricPrecision" cx="579.3" cy="453.3" r="1.4" fill="#ff00ff" stroke="none"/>
<circle shape-rendering="geometricPrecision" cx="672.5" cy="453.2" r="1.4" fill="#ff00ff" stroke="none"/>
<path d="M573.5 457.5L958.5 457.5" stroke="#00ffff" stroke-width="1"/>
<path d="M576.5 460.5L882.5 460.5" stroke="#00ff00" stroke-width="1"/>
<path d="M568 515.4H570V517.4H568Z" fill="#ff00ff" stroke="none"/>
<path d="M569.5 516.5L572.5 516.5" stroke="#ff00ff" stroke-width="1"/>
<path d="M568 605H570V607H568Z" fill="#ff00ff" stroke="none"/>
<path d="M569.5 606.5L572.5 606.5" stroke="#ff00ff" stroke-width="1"/>
<path d="M568 693.2H570V695.2H568Z" fill="#ff00ff" stroke="none"/>
<path d="M569.5 694.5L572.5 694.5" stroke="#ff00ff" stroke-width="1"/>
<circle shape-rendering="geometricPrecision" cx="577" cy="567.8" r="1" fill="#00ff00" stroke="none"/>
<circle shape-rendering="geometricPrecision" cx="577" cy="688.5" r="1" fill="#00ff00" stroke="none"/>
<circle shape-rendering="geometricPrecision" cx="577" cy="460.5" r="1" fill="#00ff00" stroke="none"/>
</g>
<g id="top_left_buildings">
<path d="M598.5 421V425.500Q598.5 428.5 595.5 428.5H583.500Q579.5 428.5 579.5 424.500V409.500Q579.5 405.5 583.5 405.5H621.500Q625.5 405.5 625.5 409.500V424.500Q625.5 428.5 621.500 428.5H608.500Q605.5 428.5 605.5 425.500V421" stroke="#ff0000" stroke-width="1" shape-rendering="geometricPrecision"/>
<path d="M593.5 450V449.500Q593.5 451.5 590.500 451.5H583.500Q579.5 451.5 579.5 447.500V439.500Q579.5 435.5 583.5 435.5H621.500Q625.5 435.5 625.5 439.500V447.500Q625.5 451.5 621.500 451.5H603.500Q600.5 451.5 600.5 449.5" stroke="#ff0000" stroke-width="1" shape-rendering="geometricPrecision"/>
<rect x="584.5" y="410.5" width="37" height="10" stroke="#808080" stroke-width="1" fill="#000"/>
<rect x="584.5" y="437.5" width="37" height="12" stroke="#808080" stroke-width="1" fill="#000"/>
<rect x="579.5" y="422.5" width="7" height="7" stroke="#808080" stroke-width="1" fill="#222"/>
<rect x="584.5" y="430.5" width="9" height="7" stroke="#00ffff" stroke-width="1" fill="none"/>
<path d="M585.5 433.5L593.5 433.5" stroke="#00ffff" stroke-width="1"/>
<path d="M585.5 435.5L593.5 435.5" stroke="#00ffff" stroke-width="2"/>
<path d="M579.5 429L582.5 432.5" stroke="#00ffff" stroke-width="1"/>
<path d="M575.5 431.5L595.5 431.5" stroke="#00ff00" stroke-width="1"/>
<circle shape-rendering="geometricPrecision" cx="576.8" cy="431.9" r="1" fill="#00ff00" stroke="none"/>
<circle shape-rendering="geometricPrecision" cx="595.1" cy="431.9" r="1" fill="#00ff00" stroke="none"/>
<path d="M589.5 409V420.7M591.5 409V420.7M593.5 409V420.7M595.5 409V420.7M588.5 415.5H601.5M588.7 415.5L584.2 420.7" stroke="#00ffff" stroke-width="1"/>
<path d="M604.5 409V420.7M606.5 409V420.7M608.5 409V420.7M610.5 409V420.7M612.5 409V420.7M604 415.5H616M615.7 415.5L621 410" stroke="#00ffff" stroke-width="1"/>
<path d="M589.5 438V449.7M591.5 438V449.7M593.5 438V449.7M595.5 438V449.7M588.5 444.5H601.5M588.7 444.3L584.2 449.7" stroke="#00ffff" stroke-width="1"/>
<path d="M606.5 437V449.7M608.5 437V449.7M610.5 437V449.7M612.5 437V449.7M614.5 437V449.7M604 443.5H616M615.7 443.6L621 438" stroke="#00ffff" stroke-width="1"/>
<rect x="599.1" y="411.1" width="6.600" height="6.600" fill="#ffffff" stroke="none"/><circle shape-rendering="geometricPrecision" cx="602.4" cy="414.4" r="2.200" fill="#000" stroke="none"/>
<rect x="599.5" y="440.3" width="6.600" height="6.600" fill="#ffffff" stroke="none"/><circle shape-rendering="geometricPrecision" cx="602.8" cy="443.6" r="2.200" fill="#000" stroke="none"/>
<circle shape-rendering="geometricPrecision" cx="578.4" cy="418.3" r="3.1" fill="#000" stroke="#ffffff" stroke-width="1.3"/><path d="M577.4 416.3V420.3M579.4 416.3V420.3" stroke="#ffffff" stroke-width=".8"/>
<path d="M603.5 420.5L603.5 431.5L630.5 431.5L630.5 457.5" stroke="#00ffff" stroke-width="1"/>
<path d="M613.5 426.5L613.5 437.5" stroke="#00ffff" stroke-width="1"/>
<circle shape-rendering="geometricPrecision" cx="613.9" cy="426.7" r="1.3" fill="#00ffff" stroke="none"/>
<circle shape-rendering="geometricPrecision" cx="613.9" cy="437" r="1.3" fill="#00ffff" stroke="none"/>
<path d="M598.5 449.5L598.5 464.5" stroke="#00ffff" stroke-width="1"/>
<circle shape-rendering="geometricPrecision" cx="599" cy="464.7" r="1.3" fill="#00ffff" stroke="none"/>
<path d="M594.5 420.5L594.5 431.5" stroke="#00ff00" stroke-width="1"/>
<path d="M594.5 449.5L594.5 460.5" stroke="#00ff00" stroke-width="1"/>
<path d="M606.5 449.5L606.5 469.5L622.5 469.5L622.5 484.5" stroke="#00ff00" stroke-width="2"/>
<path d="M614.5 467.5L690.5 467.5L690.5 484.5" stroke="#00ff00" stroke-width="1"/>
<rect x="605.5" y="475" width="9.0" height="6" fill="#6a6a6a" stroke="none"/>
<rect x="620.5" y="475" width="4.0" height="6" fill="#6a6a6a" stroke="none"/>
<rect x="630.5" y="475" width="9.0" height="6" fill="#6a6a6a" stroke="none"/>
<rect x="672.5" y="475" width="9.0" height="6" fill="#6a6a6a" stroke="none"/>
<rect x="687.5" y="475" width="4.0" height="6" fill="#6a6a6a" stroke="none"/>
<rect x="697.5" y="475" width="9.0" height="6" fill="#6a6a6a" stroke="none"/>
<path d="M608.5 472.5L621.5 472.5" stroke="#ffff00" stroke-width="1"/>
<path d="M625.5 472.5L687.5 472.5" stroke="#ffff00" stroke-width="1"/>
<path d="M691.5 472.5L729.5 472.5" stroke="#ffff00" stroke-width="1"/>
<path d="M608.5 472.5L608.5 484.5" stroke="#ffff00" stroke-width="1"/>
<path d="M611.5 472.5L611.5 484.5" stroke="#ffff00" stroke-width="1"/>
<path d="M633.5 472.5L633.5 484.5" stroke="#ffff00" stroke-width="1"/>
<path d="M636.5 472.5L636.5 484.5" stroke="#ffff00" stroke-width="1"/>
<path d="M675.5 472.5L675.5 484.5" stroke="#ffff00" stroke-width="1"/>
<path d="M679.5 472.5L679.5 484.5" stroke="#ffff00" stroke-width="1"/>
<path d="M700.5 472.5L700.5 484.5" stroke="#ffff00" stroke-width="1"/>
<path d="M703.5 472.5L703.5 484.5" stroke="#ffff00" stroke-width="1"/>
<path d="M611.5 460.5L611.5 472.5" stroke="#ffff00" stroke-width="1"/>
<path d="M633.5 460.5L633.5 472.5" stroke="#ffff00" stroke-width="1"/>
<path d="M678.5 460.5L678.5 472.5" stroke="#ffff00" stroke-width="1"/>
<path d="M700.5 460.5L700.5 472.5" stroke="#ffff00" stroke-width="1"/>
<circle shape-rendering="geometricPrecision" cx="577" cy="460.5" r="1" fill="#00ff00" stroke="none"/>
<circle shape-rendering="geometricPrecision" cx="594.5" cy="460.5" r="1" fill="#00ff00" stroke="none"/>
<circle shape-rendering="geometricPrecision" cx="612" cy="460.5" r="1" fill="#00ff00" stroke="none"/>
<circle shape-rendering="geometricPrecision" cx="633.9" cy="460.5" r="1" fill="#00ff00" stroke="none"/>
<circle shape-rendering="geometricPrecision" cx="679" cy="460.5" r="1" fill="#00ff00" stroke="none"/>
<circle shape-rendering="geometricPrecision" cx="700.8" cy="460.5" r="1" fill="#00ff00" stroke="none"/>
</g>
<g id="equipment">
<path d="M633.5 455.5L633.5 402.5L699.5 402.5L699.5 413.5" stroke="#00ff00" stroke-width="1"/>
<circle shape-rendering="geometricPrecision" cx="633.9" cy="403" r="1" fill="#00ff00" stroke="none"/>
<circle shape-rendering="geometricPrecision" cx="700.2" cy="403" r="1" fill="#00ff00" stroke="none"/>
<path d="M667.5 410.500Q667.5 405.5 662.5 405.5H640.500Q635.5 405.5 635.5 410.500V446.500Q635.5 451.5 640.500 451.5H660.500Q664.5 451.5 664.5 447.5" stroke="#ff0000" stroke-width="1" shape-rendering="geometricPrecision"/>
<path d="M674.5 410.500Q674.5 405.5 679.5 405.5H691.500Q696.5 405.5 696.5 410.500V413.5" stroke="#ff0000" stroke-width="1" shape-rendering="geometricPrecision"/>
<path d="M701.5 413.500V410.500Q701.5 405.5 706.5 405.5H736.500Q741.5 405.5 741.5 410.500V446.500Q741.5 451.5 736.500 451.5H672.500Q667.5 451.5 667.5 447.5" stroke="#ff0000" stroke-width="1" shape-rendering="geometricPrecision"/>
<rect x="639.5" y="422.5" width="13" height="9" rx="1.500" stroke="#808080" stroke-width="1"/>
<path d="M652.5 422.500L656.5 415.500M652.5 431.500L656.5 437.500" stroke="#808080" stroke-width="1" shape-rendering="geometricPrecision"/>
<path d="M656.5 415.5H681.500V438.500H656.500ZM664.5 415.5V447.500H677.500V415.5M664.5 438.5H677.500M657 420.500H664M657 424.500H664M657 428.500H664M657 433.500H664M681.5 422.5H688.500M681.5 431.5H688.500M688.5 411.5V435M701.5 413.5V435M701.5 422.5H709.500L713.5 424.500M701.5 431.5H709.500L713.5 429.500" stroke="#808080" stroke-width="1"/>
<path d="M657 437.500H664" stroke="#808080" stroke-width="2"/>
<path shape-rendering="geometricPrecision" d="M714.500 420V435.500M721.500 420V435.500M712.500 419A5.800 5.800 0 1 1 723.500 419M712.500 436.500A5.800 5.800 0 1 0 723.500 436.500M712.500 419L714.500 421M723.500 419L721.500 421M712.500 436.500L714.500 434.500M723.500 436.500L721.500 434.500" stroke="#808080" stroke-width="1"/>
<circle shape-rendering="geometricPrecision" cx="718" cy="415.500" r="3.300" stroke="#808080" stroke-width="1"/><circle shape-rendering="geometricPrecision" cx="718" cy="439.500" r="3.300" stroke="#808080" stroke-width="1"/>
<circle shape-rendering="geometricPrecision" cx="646.6" cy="427.5" r="3.1" fill="#000" stroke="#ffffff" stroke-width="1.3"/><path d="M645.6 425.5V429.5M647.6 425.5V429.5" stroke="#ffffff" stroke-width=".8"/>
<circle shape-rendering="geometricPrecision" cx="671.5" cy="426.4" r="3.1" fill="#000" stroke="#ffffff" stroke-width="1.3"/><path d="M670.5 424.4V428.4M672.5 424.4V428.4" stroke="#ffffff" stroke-width=".8"/>
<circle shape-rendering="geometricPrecision" cx="706.5" cy="412.6" r="3.1" fill="#000" stroke="#ffffff" stroke-width="1.3"/><path d="M705.5 410.6V414.6M707.5 410.6V414.6" stroke="#ffffff" stroke-width=".8"/>
<circle shape-rendering="geometricPrecision" cx="727.5" cy="421.5" r="3.1" fill="#000" stroke="#ffffff" stroke-width="1.3"/><path d="M726.5 419.5V423.5M728.5 419.5V423.5" stroke="#ffffff" stroke-width=".8"/>
<circle shape-rendering="geometricPrecision" cx="723.5" cy="447.5" r="3.1" fill="#000" stroke="#ffffff" stroke-width="1.3"/><path d="M722.5 445.5V449.5M724.5 445.5V449.5" stroke="#ffffff" stroke-width=".8"/>
<path d="M664.5 408V420M666.5 408V420M668.5 408V420M670.5 408V420M672.5 408V420M664 415.5H673.5M673.3 415L677.6 410.3" stroke="#00ffff" stroke-width="1"/>
<path d="M648.5 436V448M650.5 436V448M652.5 436V448M654.5 436V448M656.5 436V448M648 442.5H659.5M659.7 442.2L664.8 447.3" stroke="#00ffff" stroke-width="1"/>
<path d="M688.5 411V423M690.5 411V423M692.5 411V423M694.5 411V423M696.5 411V423M688 417.5H698M698 416.7L701.8 413.3" stroke="#00ffff" stroke-width="1"/>
<path d="M692.5 423V435M694.5 423V435M696.5 423V435M698.5 423V435M700.5 423V435M702.5 423V435M691 429.5H705M688.6 434.5L692.9 429.4" stroke="#00ffff" stroke-width="1"/>
<path d="M701.5 436V447.5M703.5 436V447.5M705.5 436V447.5M707.5 436V447.5M709.5 436V447.5M711.5 436V447.5M701 442.5H712M712 442.6L717.9 437" stroke="#00ffff" stroke-width="1"/>
<path d="M723.5 404V416M725.5 404V416M727.5 404V416M729.5 404V416M731.5 404V416M723 411.5H734M723 411.1L716.7 416.7" stroke="#00ffff" stroke-width="1"/>
<path d="M666.5 447.5L666.5 457.5" stroke="#00ffff" stroke-width="1"/>
<path d="M690.5 434.5L690.5 457.5" stroke="#00ffff" stroke-width="1"/>
<circle shape-rendering="geometricPrecision" cx="687.8" cy="449.4" r="1.3" fill="#00ffff" stroke="none"/>
<path d="M721.5 427.5L728.5 427.5L728.5 472.5" stroke="#ffff00" stroke-width="1"/>
</g>
<g id="tanks">
<rect x="589.5" y="484.5" width="32" height="176" stroke="#808080" stroke-width="1" fill="none"/>
<rect x="623.5" y="484.5" width="31" height="176" stroke="#808080" stroke-width="1" fill="none"/>
<rect x="657.5" y="484.5" width="31" height="176" stroke="#808080" stroke-width="1" fill="none"/>
<rect x="690.5" y="484.5" width="32" height="176" stroke="#808080" stroke-width="1" fill="none"/>
<path d="M590.5 508.5L722.5 508.5" stroke="#808080" stroke-width="1"/>
<path d="M590.5 510.5L722.5 510.5" stroke="#808080" stroke-width="1"/>
<circle shape-rendering="geometricPrecision" cx="606.4" cy="567.4" r="3.1" fill="#000" stroke="#ffffff" stroke-width="1.3"/><path d="M605.4 565.4V569.4M607.4 565.4V569.4" stroke="#ffffff" stroke-width=".8"/>
<circle shape-rendering="geometricPrecision" cx="639.5" cy="567.4" r="3.1" fill="#000" stroke="#ffffff" stroke-width="1.3"/><path d="M638.5 565.4V569.4M640.5 565.4V569.4" stroke="#ffffff" stroke-width=".8"/>
<circle shape-rendering="geometricPrecision" cx="673.6" cy="567.4" r="3.1" fill="#000" stroke="#ffffff" stroke-width="1.3"/><path d="M672.6 565.4V569.4M674.6 565.4V569.4" stroke="#ffffff" stroke-width=".8"/>
<circle shape-rendering="geometricPrecision" cx="707.4" cy="567.4" r="3.1" fill="#000" stroke="#ffffff" stroke-width="1.3"/><path d="M706.4 565.4V569.4M708.4 565.4V569.4" stroke="#ffffff" stroke-width=".8"/>
<circle shape-rendering="geometricPrecision" cx="799.5" cy="567.4" r="3.1" fill="#000" stroke="#ffffff" stroke-width="1.3"/><path d="M798.5 565.4V569.4M800.5 565.4V569.4" stroke="#ffffff" stroke-width=".8"/>
<path d="M735.5 484.5H867.5V660.500H735.500Z" stroke="#808080" stroke-width="1" stroke-dasharray="13 3"/>
<path d="M606.5 483V495M608.5 483V495M610.5 483V495M612.5 483V495M614.5 483V495M606 489.5H617M617 489L622.5 484.5" stroke="#00ffff" stroke-width="1"/>
<path d="M638.5 483V495M640.5 483V495M642.5 483V495M644.5 483V495M646.5 483V495M638 489.5H649M649 489L654.5 484.5" stroke="#00ffff" stroke-width="1"/>
<path d="M673.5 483V495M675.5 483V495M677.5 483V495M679.5 483V495M681.5 483V495M671 489.5H684M684 489L689 484.5" stroke="#00ffff" stroke-width="1"/>
<path d="M706.5 483V495M708.5 483V495M710.5 483V495M712.5 483V495M714.5 483V495M706 489.5H717M717 489L722.5 484.5" stroke="#00ffff" stroke-width="1"/>
<path d="M851.5 473V484M853.5 473V484M855.5 473V484M857.5 473V484M859.5 473V484M861.5 473V484M851 479.5H863M863 479L867.5 484.5" stroke="#00ffff" stroke-width="1"/>
<path d="M594.5 648V660M596.5 648V660M598.5 648V660M600.5 648V660M602.5 648V660M594 655.5H606M594 655L589.5 660.5" stroke="#00ffff" stroke-width="1"/>
<path d="M627.5 648V660M629.5 648V660M631.5 648V660M633.5 648V660M635.5 648V660M637.5 648V660M627 655.5H639M627 655L622.5 660.5" stroke="#00ffff" stroke-width="1"/>
<path d="M663.5 648V660M665.5 648V660M667.5 648V660M669.5 648V660M663 655.5H673M663 655L657.5 660.5" stroke="#00ffff" stroke-width="1"/>
<path d="M694.5 648V660M696.5 648V660M698.5 648V660M700.5 648V660M702.5 648V660M704.5 648V660M694 655.5H706M694 655L689.5 660.5" stroke="#00ffff" stroke-width="1"/>
<path d="M740.5 648V660M742.5 648V660M744.5 648V660M746.5 648V660M748.5 648V660M740 655.5H751M740 655L735.5 660.5" stroke="#00ffff" stroke-width="1"/>
<path d="M590.5 664.5L601.5 664.5" stroke="#00ff00" stroke-width="1"/>
<path d="M609.5 664.5L619.5 664.5" stroke="#00ff00" stroke-width="1"/>
<path d="M626.5 664.5L635.5 664.5" stroke="#00ff00" stroke-width="1"/>
<path d="M643.5 664.5L654.5 664.5" stroke="#00ff00" stroke-width="1"/>
<path d="M658.5 664.5L670.5 664.5" stroke="#00ff00" stroke-width="1"/>
<path d="M678.5 664.5L688.5 664.5" stroke="#00ff00" stroke-width="1"/>
<path d="M691.5 664.5L703.5 664.5" stroke="#00ff00" stroke-width="1"/>
<path d="M711.5 664.5L721.5 664.5" stroke="#00ff00" stroke-width="1"/>
<path d="M590.5 660.5L590.5 664.5" stroke="#00ff00" stroke-width="1"/>
<path d="M654.5 660.5L654.5 664.5" stroke="#00ff00" stroke-width="1"/>
<path d="M721.5 660.5L721.5 664.5" stroke="#00ff00" stroke-width="1"/>
<path d="M622.5 660.5L622.5 668.5L606.5 668.5L606.5 697.5" stroke="#ffff00" stroke-width="1"/>
<path d="M622.5 668.5L689.5 668.5L689.5 660.5" stroke="#ffff00" stroke-width="1"/>
<path d="M681.5 668.5L681.5 741.5" stroke="#00ff00" stroke-width="1"/>
<rect x="620.5" y="655.5" width="3" height="5" stroke="#808080" stroke-width="1" fill="none"/>
<rect x="687.5" y="655.5" width="3" height="5" stroke="#808080" stroke-width="1" fill="none"/>
</g>
<g id="bottom_bundle">
<path d="M571.5 682.5L887.5 682.5" stroke="#ff00ff" stroke-width="1"/>
<rect x="585.8" y="680.5" width="3" height="3" fill="#ff00ff" stroke="none"/>
<rect x="669.2" y="680.5" width="3" height="3" fill="#ff00ff" stroke="none"/>
<rect x="819.9" y="680.5" width="3" height="3" fill="#ff00ff" stroke="none"/>
<path d="M576.5 688.5L782.5 688.5" stroke="#00ff00" stroke-width="1"/>
<path d="M882.5 460.5L882.5 557.5" stroke="#00ff00" stroke-width="1"/>
<path d="M887.5 400.5L887.5 682.5" stroke="#ff00ff" stroke-width="1"/>
<path d="M759.5 400.5L940.5 400.5" stroke="#ff00ff" stroke-width="1"/>
<path d="M759.5 395.5L759.5 400.5" stroke="#ff00ff" stroke-width="1"/>
<rect x="758" y="395.5" width="3" height="2" fill="#ff00ff" stroke="none"/>
<path d="M849.5 395.5L849.5 400.5" stroke="#ff00ff" stroke-width="1"/>
<rect x="848" y="395.5" width="3" height="2" fill="#ff00ff" stroke="none"/>
<path d="M939.5 395.5L939.5 400.5" stroke="#ff00ff" stroke-width="1"/>
<rect x="938" y="395.5" width="3" height="2" fill="#ff00ff" stroke="none"/>
<path d="M759.5 454.5L887.5 454.5" stroke="#ff00ff" stroke-width="1"/>
<rect x="847.5" y="452.5" width="3" height="3" stroke="#ff00ff" stroke-width="1" fill="none"/>
<circle shape-rendering="geometricPrecision" cx="759.5" cy="452.5" r="1.4" fill="#ff00ff" stroke="none"/>
<path d="M879.5 611.300H882.500V614.300H879.500Z" fill="#ff00ff" stroke="none"/>
<path d="M881.5 612.5L884.5 612.5" stroke="#ff00ff" stroke-width="1"/>
<path d="M888.5 476.500H891V479H888.500Z" fill="#ff00ff" stroke="none"/>
<path d="M1004.5 600.5H894.500Q890.5 600.5 890.5 604.500V685.500Q890.5 690.5 885.5 690.5H860.500Q855.5 690.5 855.5 695.500V768.5" stroke="#ff0000" stroke-width="1" shape-rendering="geometricPrecision"/>
</g>
<g id="top_mid_buildings">
<path d="M832.5 419.5V410.500Q832.5 405.5 827.5 405.5H757.500Q752.5 405.5 752.5 410.500V446.500Q752.5 451.5 757.500 451.5H782.500Q786.5 451.5 786.5 447.500V437.5" stroke="#ff0000" stroke-width="1" shape-rendering="geometricPrecision"/>
<path d="M793.5 437.5V447.500Q793.5 451.5 797.5 451.5H875.500Q879.5 451.5 879.5 446.500V410.500Q879.5 405.5 874.500 405.5H873.500Q868.5 405.5 868.5 410.500V419.5" stroke="#ff0000" stroke-width="1" shape-rendering="geometricPrecision"/>
<rect x="771.5" y="419.5" width="36" height="18" stroke="#808080" stroke-width="1" fill="#000"/>
<path d="M790.5 418V430M792.5 418V430M794.5 418V430M796.5 418V430M798.5 418V430M800.5 418V430M802.5 418V430M790 424.5H803M803 424L807.5 419.5" stroke="#00ffff" stroke-width="1"/>
<path d="M776.5 425V437.5M778.5 425V437.5M780.5 425V437.5M782.5 425V437.5M784.5 425V437.5M786.5 425V437.5M776 432.5H788M776 432.6L771.5 437.5" stroke="#00ffff" stroke-width="1"/>
<rect x="798.2" y="430.4" width="6.600" height="6.600" fill="#ffffff" stroke="none"/><circle shape-rendering="geometricPrecision" cx="801.5" cy="433.7" r="2.200" fill="#000" stroke="none"/>
<rect x="832.5" y="419.5" width="36" height="18" stroke="#808080" stroke-width="1" fill="#000"/>
<path d="M851.5 418V430M853.5 418V430M855.5 418V430M857.5 418V430M859.5 418V430M861.5 418V430M863.5 418V430M851.1 424.5H864.1M864.1 424L868.6 419.5" stroke="#00ffff" stroke-width="1"/>
<path d="M837.5 425V437.5M839.5 425V437.5M841.5 425V437.5M843.5 425V437.5M845.5 425V437.5M847.5 425V437.5M837.1 432.5H849.1M837.1 432.6L832.6 437.5" stroke="#00ffff" stroke-width="1"/>
<rect x="859.3" y="430.4" width="6.600" height="6.600" fill="#ffffff" stroke="none"/><circle shape-rendering="geometricPrecision" cx="862.6" cy="433.7" r="2.200" fill="#000" stroke="none"/>
<path d="M778.5 437.5L778.5 460.5" stroke="#00ff00" stroke-width="1"/>
<path d="M845.5 437.5L845.5 460.5" stroke="#00ff00" stroke-width="1"/>
<path d="M791.5 437.5L791.5 457.5" stroke="#00ffff" stroke-width="1"/>
<path d="M853.5 437.5L853.5 457.5" stroke="#00ffff" stroke-width="1"/>
<path d="M791.5 449.5L796.5 449.5" stroke="#00ffff" stroke-width="1"/>
<circle shape-rendering="geometricPrecision" cx="796.5" cy="449.5" r="1.5" fill="#00ffff" stroke="none"/>
<path d="M853.5 449.5L858.5 449.5" stroke="#00ffff" stroke-width="1"/>
<circle shape-rendering="geometricPrecision" cx="858.5" cy="449.5" r="1.5" fill="#00ffff" stroke="none"/>
<circle shape-rendering="geometricPrecision" cx="758" cy="460.5" r="1" fill="#00ff00" stroke="none"/>
<circle shape-rendering="geometricPrecision" cx="778.9" cy="460.5" r="1" fill="#00ff00" stroke="none"/>
<circle shape-rendering="geometricPrecision" cx="825" cy="460.5" r="1" fill="#00ff00" stroke="none"/>
<circle shape-rendering="geometricPrecision" cx="846.1" cy="460.5" r="1" fill="#00ff00" stroke="none"/>
</g>
<g id="circles_right">
<path d="M882.5 460.5L882.5 424.5L901.5 424.5" stroke="#00ff00" stroke-width="1"/>
<circle shape-rendering="geometricPrecision" cx="883" cy="424.5" r="1" fill="#00ff00" stroke="none"/>
<circle cx="918.6" cy="424.5" r="17.500" stroke="#ff0000" stroke-width="1"/>
<path d="M923.5 413V425M925.5 413V425M927.5 413V425M929.5 413V425M931.5 413V425M923 419.5H934M923 419.5L918.6 424.5" stroke="#00ffff" stroke-width="1"/>
<rect x="915.3" y="421.2" width="6.600" height="6.600" fill="#ffffff" stroke="none"/><circle shape-rendering="geometricPrecision" cx="918.6" cy="424.5" r="2.200" fill="#000" stroke="none"/>
<path d="M917.5 442.5L917.5 457.5" stroke="#00ffff" stroke-width="1"/>
<path d="M933.9 462.5C931.9 462.3 926.4 460.7 921.8 461.4C917.2 462.1 910.3 463.8 906.2 466.8C902.1 469.8 898.8 475.5 897.0 479.5C895.2 483.5 894.9 487.1 895.5 490.9C896.1 494.7 898.5 499.3 900.5 502.3C902.5 505.3 904.0 507.6 907.6 508.7C911.2 509.8 917.3 509.3 922.0 509.2C926.7 509.1 932.0 509.9 936.0 508.0C940.0 506.1 943.5 501.3 946.0 498.0C948.5 494.7 950.2 490.9 951.0 488.0C951.8 485.1 951.0 481.6 951.0 480.3M933.0 464.7C931.2 464.5 926.2 463.0 921.9 463.7C917.7 464.3 911.5 465.8 907.7 468.6C903.9 471.3 900.9 476.4 899.3 480.1C897.6 483.7 897.3 486.9 897.9 490.4C898.4 493.8 900.6 498.0 902.5 500.7C904.3 503.4 905.7 505.5 909.0 506.5C912.2 507.5 917.8 507.1 922.1 506.9C926.5 506.8 931.3 507.6 934.9 505.9C938.6 504.2 941.8 499.8 944.1 496.8C946.4 493.8 947.9 490.4 948.7 487.8C949.4 485.1 948.7 482.0 948.7 480.8M933.9 462.5L933.0 464.7M951 480.3L948.7 480.8" stroke="#ff0000" stroke-width="1" shape-rendering="geometricPrecision"/>
<path d="M936.7 464.0C938.0 464.7 942.2 466.3 944.5 468.2C946.8 470.1 949.2 474.1 950.2 475.3M936.2 466.2C937.3 466.8 940.8 468.3 942.8 470.0C944.8 471.7 947.1 475.2 948.0 476.3M936.7 464L936.2 466.2M950.2 475.3L948 476.3" stroke="#ff0000" stroke-width="1" shape-rendering="geometricPrecision"/>
<rect x="920" y="482.5" width="6.600" height="6.600" fill="#ffffff" stroke="none"/><circle shape-rendering="geometricPrecision" cx="923.3" cy="485.8" r="2.200" fill="#000" stroke="none"/>
<path d="M960.5 412.5L955.5 412.5L955.5 457.5L958.5 457.5" stroke="#00ffff" stroke-width="1"/>
<path d="M958 409.500L961.5 412.500L958 415.500" stroke="#00ffff" stroke-width="1"/>
<rect x="958.5" y="414.5" width="36" height="89" stroke="#808080" stroke-width="1" fill="none"/>
<path d="M978.5 413V425M980.5 413V425M982.5 413V425M984.5 413V425M986.5 413V425M978 419.5H989M989 419L994.5 414.5" stroke="#00ffff" stroke-width="1"/>
<path d="M961.5 492V503.5M963.5 492V503.5M965.5 492V503.5M967.5 492V503.5M969.5 492V503.5M961 498.5H975M961.6 498.5L958.5 503.5" stroke="#00ffff" stroke-width="1"/>
<rect x="972.1" y="459.3" width="6.600" height="6.600" fill="#ffffff" stroke="none"/><circle shape-rendering="geometricPrecision" cx="975.4" cy="462.6" r="2.200" fill="#000" stroke="none"/>
<path d="M1018.5 375V387M1020.5 375V387M1022.5 375V387M1024.5 375V387M1026.5 375V387M1016 382.5H1031M1016 382.3L1011.5 387.5" stroke="#00ffff" stroke-width="1"/>
<path d="M987.5 503.5L987.5 557.5L882.5 557.5" stroke="#00ff00" stroke-width="1"/>
<circle shape-rendering="geometricPrecision" cx="883" cy="557.5" r="1" fill="#00ff00" stroke="none"/>
<circle shape-rendering="geometricPrecision" cx="988.4" cy="557.5" r="1" fill="#00ff00" stroke="none"/>
</g>
<g id="four_buildings">
<path d="M887.5 520.5L922.5 520.5" stroke="#ff00ff" stroke-width="1"/>
<circle shape-rendering="geometricPrecision" cx="891.5" cy="523" r="1.4" fill="#ff00ff" stroke="none"/>
<circle shape-rendering="geometricPrecision" cx="922.5" cy="523" r="1.4" fill="#ff00ff" stroke="none"/>
<path d="M958.5 503.5V516.500Q958.5 523.5 951.5 523.5H927.500Q921.500 523.5 921.5 529.5" stroke="#ff0000" stroke-width="1" shape-rendering="geometricPrecision"/>
<rect x="890.5" y="523.5" width="26" height="32" rx="4" stroke="#ff0000" stroke-width="1" shape-rendering="geometricPrecision"/>
<path d="M921.5 549.5V551.500Q921.5 555.5 925.5 555.5H959.500Q963.5 555.5 964.5 549.5" stroke="#ff0000" stroke-width="1" shape-rendering="geometricPrecision"/>
<path d="M969.5 549.5V551.500Q969.5 555.5 973.5 555.5Q977.5 555.5 977.5 560.500V599.5" stroke="#ff0000" stroke-width="1" shape-rendering="geometricPrecision"/>
<rect x="890.5" y="562.5" width="25" height="31" rx="4" stroke="#ff0000" stroke-width="1" shape-rendering="geometricPrecision"/>
<rect x="921.5" y="562.5" width="52" height="31" rx="4" stroke="#ff0000" stroke-width="1" shape-rendering="geometricPrecision"/>
<rect x="901.5" y="530.5" width="35" height="18" stroke="#808080" stroke-width="1" fill="#000"/>
<rect x="949.5" y="530.5" width="32" height="18" stroke="#808080" stroke-width="1" fill="#000"/>
<rect x="901.5" y="570.5" width="35" height="15" stroke="#808080" stroke-width="1" fill="#000"/>
<rect x="949.5" y="570.5" width="36" height="15" stroke="#808080" stroke-width="1" fill="#000"/>
<path d="M884.5 559.5L957.5 559.5" stroke="#00ffff" stroke-width="1"/>
<path d="M916.5 548.5L916.5 570.5" stroke="#00ffff" stroke-width="1"/>
<path d="M960.5 548.5L960.5 570.5" stroke="#00ffff" stroke-width="1"/>
<path d="M920.5 548.5L920.5 570.5" stroke="#00ff00" stroke-width="1"/>
<path d="M967.5 548.5L967.5 570.5" stroke="#00ff00" stroke-width="1"/>
<path d="M921.5 528V541M923.5 528V541M925.5 528V541M927.5 528V541M929.5 528V541M920.5 535.5H932M932 535.2L936.5 530.5" stroke="#00ffff" stroke-width="1"/>
<path d="M906.5 537V548.7M908.5 537V548.7M910.5 537V548.7M912.5 537V548.7M914.5 537V548.7M906 543.5H917M906 543.7L901.5 548.5" stroke="#00ffff" stroke-width="1"/>
<path d="M965.5 529V541M967.5 529V541M969.5 529V541M971.5 529V541M973.5 529V541M964.5 535.5H976.5M976.5 535.7L981.5 530.5" stroke="#00ffff" stroke-width="1"/>
<path d="M953.5 536V548.7M955.5 536V548.7M957.5 536V548.7M959.5 536V548.7M961.5 536V548.7M963.5 536V548.7M953 543.5H966M953 543.7L949.5 548.5" stroke="#00ffff" stroke-width="1"/>
<path d="M921.5 569V581M923.5 569V581M925.5 569V581M927.5 569V581M929.5 569V581M920.5 575.5H932M932 575.9L936.5 570.5" stroke="#00ffff" stroke-width="1"/>
<path d="M906.5 574V585.5M908.5 574V585.5M910.5 574V585.5M912.5 574V585.5M914.5 574V585.5M906 580.5H917M906 580.2L901.5 585.5" stroke="#00ffff" stroke-width="1"/>
<path d="M968.5 569V581.5M970.5 569V581.5M972.5 569V581.5M974.5 569V581.5M976.5 569V581.5M978.5 569V581.5M968 575.5H980M980 575.9L985.5 570.5" stroke="#00ffff" stroke-width="1"/>
<path d="M954.5 573V585M956.5 573V585M958.5 573V585M960.5 573V585M962.5 573V585M954 580.5H966M954 580.2L949.5 585.5" stroke="#00ffff" stroke-width="1"/>
<rect x="928" y="541.4" width="6.600" height="6.600" fill="#ffffff" stroke="none"/><circle shape-rendering="geometricPrecision" cx="931.3" cy="544.7" r="2.200" fill="#000" stroke="none"/>
<rect x="972.9" y="541.4" width="6.600" height="6.600" fill="#ffffff" stroke="none"/><circle shape-rendering="geometricPrecision" cx="976.2" cy="544.7" r="2.200" fill="#000" stroke="none"/>
<rect x="929.2" y="578.3" width="6.600" height="6.600" fill="#ffffff" stroke="none"/><circle shape-rendering="geometricPrecision" cx="932.5" cy="581.6" r="2.200" fill="#000" stroke="none"/>
<rect x="978.2" y="578.3" width="6.600" height="6.600" fill="#ffffff" stroke="none"/><circle shape-rendering="geometricPrecision" cx="981.5" cy="581.6" r="2.200" fill="#000" stroke="none"/>
<path d="M910.5 552.5Q913.5 558.500 910.5 565.500M956.5 552.5Q959.500 558.500 956.5 565.500" stroke="#00ffff" stroke-width="1.3" shape-rendering="geometricPrecision"/>
<circle shape-rendering="geometricPrecision" cx="911" cy="552.5" r="1.2" fill="#00ffff" stroke="none"/>
<circle shape-rendering="geometricPrecision" cx="911" cy="565.5" r="1.2" fill="#00ffff" stroke="none"/>
<circle shape-rendering="geometricPrecision" cx="957" cy="552.5" r="1.2" fill="#00ffff" stroke="none"/>
<circle shape-rendering="geometricPrecision" cx="957" cy="565.5" r="1.2" fill="#00ffff" stroke="none"/>
<text x="941.7" y="643.3" fill="#ffff00" stroke="none" font-size="7" text-anchor="middle" font-weight="bold">发</text>
<text x="941.7" y="654.3" fill="#ffff00" stroke="none" font-size="7" text-anchor="middle" font-weight="bold">展</text>
<text x="941.7" y="665.3" fill="#ffff00" stroke="none" font-size="7" text-anchor="middle" font-weight="bold">预</text>
<text x="941.7" y="676.3" fill="#ffff00" stroke="none" font-size="7" text-anchor="middle" font-weight="bold">留</text>
<text x="941.7" y="687.3" fill="#ffff00" stroke="none" font-size="7" text-anchor="middle" font-weight="bold">地</text>
</g>
<g id="bottom_left">
<rect x="578.5" y="690.5" width="87" height="68" rx="4" stroke="#ff0000" stroke-width="1" shape-rendering="geometricPrecision"/>
<path d="M755.5 758.5H676.500Q672.5 758.5 672.5 754.500V694.500Q672.5 690.5 676.500 690.5H751.500Q755.5 690.5 755.5 694.500Z" stroke="#ff0000" stroke-width="1" shape-rendering="geometricPrecision"/>
<rect x="589.5" y="699.5" width="33" height="25" stroke="#808080" stroke-width="1" fill="none"/>
<path d="M594.5 700.500V720.500M600.5 703.500V724.500M606.5 700.500V720.500M611.5 703.500V724.500M617.5 700.500V720.500" stroke="#808080" stroke-width="1"/>
<path d="M622.5 699.5H655.5V724.500H622.5" stroke="#808080" stroke-width="1" stroke-dasharray="7 3"/>
<rect x="618.5" y="737.5" width="36" height="18" stroke="#808080" stroke-width="1" fill="none"/>
<rect x="604.5" y="730.5" width="3" height="18" stroke="#808080" stroke-width="1" fill="none"/>
<circle shape-rendering="geometricPrecision" cx="588.3" cy="696.6" r="3.1" fill="#000" stroke="#ffffff" stroke-width="1.3"/><path d="M587.3 694.6V698.6M589.3 694.6V698.6" stroke="#ffffff" stroke-width=".8"/>
<circle shape-rendering="geometricPrecision" cx="637.3" cy="711.5" r="3.1" fill="#000" stroke="#ffffff" stroke-width="1.3"/><path d="M636.3 709.5V713.5M638.3 709.5V713.5" stroke="#ffffff" stroke-width=".8"/>
<circle shape-rendering="geometricPrecision" cx="612.5" cy="745.3" r="3.1" fill="#000" stroke="#ffffff" stroke-width="1.3"/><path d="M611.5 743.3V747.3M613.5 743.3V747.3" stroke="#ffffff" stroke-width=".8"/>
<rect x="639" y="744.4" width="6.600" height="6.600" fill="#ffffff" stroke="none"/><circle shape-rendering="geometricPrecision" cx="642.3" cy="747.7" r="2.200" fill="#000" stroke="none"/>
<path d="M591.5 697.5L619.5 697.5L619.5 699.5" stroke="#ffff00" stroke-width="1"/>
<path d="M603.5 724.500V727.500H609.5V724.500M606.5 727.500V730.5" stroke="#ffff00" stroke-width="1"/>
<path d="M591.5 685.5L591.5 692.5" stroke="#00ffff" stroke-width="1"/>
<circle shape-rendering="geometricPrecision" cx="592.5" cy="693" r="1.3" fill="#00ffff" stroke="none"/>
<path d="M606.5 694.5L660.5 694.5L660.5 740.5L655.5 740.5" stroke="#00ffff" stroke-width="1"/>
<path d="M669.5 685.5L669.5 748.5L654.5 748.5" stroke="#00ffff" stroke-width="1"/>
<circle shape-rendering="geometricPrecision" cx="659.5" cy="752" r="1.4" fill="#00ffff" stroke="none"/>
<path d="M601.5 764.5L697.5 764.5" stroke="#00ff00" stroke-width="1"/>
<path d="M601.5 724.5L601.5 761.5" stroke="#00ff00" stroke-width="1"/>
<path d="M610.5 724.5L610.5 764.5" stroke="#00ff00" stroke-width="1"/>
<path d="M666.5 688.5L666.5 764.5" stroke="#00ff00" stroke-width="1"/>
<path d="M697.5 752.5L697.5 764.5" stroke="#00ff00" stroke-width="1"/>
<path d="M655.5 744.5L666.5 744.5" stroke="#00ff00" stroke-width="1"/>
<circle shape-rendering="geometricPrecision" cx="601.6" cy="764.5" r="1" fill="#00ff00" stroke="none"/>
<circle shape-rendering="geometricPrecision" cx="610.8" cy="764.5" r="1" fill="#00ff00" stroke="none"/>
<circle shape-rendering="geometricPrecision" cx="667.2" cy="764.5" r="1" fill="#00ff00" stroke="none"/>
<circle shape-rendering="geometricPrecision" cx="697.9" cy="764.5" r="1" fill="#00ff00" stroke="none"/>
<path d="M655.5 742.5H661.500Q664.5 742.5 664.5 739.500M655.5 749.500H661.500Q664.5 750.5 664.5 753.5" stroke="#ff0000" stroke-width="1" shape-rendering="geometricPrecision"/>
<path d="M570.5 761.5L846.5 761.5" stroke="#ff00ff" stroke-width="1"/>
<path d="M576.0 760.500L578.5 757L579.5 759.500Z" fill="#ff00ff" stroke="none"/>
<path d="M670.5 760.500L673 757L674 759.500Z" fill="#ff00ff" stroke="none"/>
<path d="M754.0 760.500L756.5 757L757.5 759.500Z" fill="#ff00ff" stroke="none"/>
<path d="M843.5 760.500L846 757L847 759.500Z" fill="#ff00ff" stroke="none"/>
<path d="M625.5 698V710M627.5 698V710M629.5 698V710M631.5 698V710M633.5 698V710M626 704.5H638M626 704.1L621.5 699.5" stroke="#00ffff" stroke-width="1"/>
<path d="M638.5 712.6V736.8M640.5 712.6V736.8M642.5 712.6V736.8M644.5 712.6V736.8M638 719.5H650M650 719.7L655 724.5" stroke="#00ffff" stroke-width="1"/>
<path d="M638 732.5H650L655 737.5" stroke="#00ffff" stroke-width="1"/>
<path d="M614.5 728V739.6M616.5 728V739.6M618.5 728V739.6M612 735.5H623M612 735.3L606.5 730.5" stroke="#00ffff" stroke-width="1"/>
<path d="M593.5 729V741M595.5 729V741M597.5 729V741M599.5 729V741M591 735.5H600" stroke="#00ffff" stroke-width="1"/>
<path d="M591.5 735.5L600.5 735.5" stroke="#ff00ff" stroke-width="1"/>
<path d="M588.5 739.6V751M590.5 739.6V751M592.5 739.6V751M594.5 739.6V751M588 745.5H600M600 745.3L606 748.5" stroke="#00ffff" stroke-width="1"/>
<path d="M623.5 744V755.7M625.5 744V755.7M627.5 744V755.7M629.5 744V755.7M623 750.5H635M623.8 750.5L618.5 755.5" stroke="#00ffff" stroke-width="1"/>
<path d="M589.5 724.5L591 734" stroke="#00ffff" stroke-width="1"/>
<circle cx="697.4" cy="708.4" r="11" stroke="#808080" stroke-width="1"/>
<path d="M703.5 696.9V708.9M705.5 696.9V708.9M707.5 696.9V708.9M709.5 696.9V708.9M702.4 703.5H712.9M702.4 703.8L697.4 708.9" stroke="#00ffff" stroke-width="1"/>
<circle shape-rendering="geometricPrecision" cx="697.4" cy="714.9" r="3.1" fill="#000" stroke="#ffffff" stroke-width="1.3"/><path d="M696.4 712.9V716.9M698.4 712.9V716.9" stroke="#ffffff" stroke-width=".8"/>
<circle cx="697.4" cy="741.7" r="11" stroke="#808080" stroke-width="1"/>
<path d="M703.5 730.2V742.2M705.5 730.2V742.2M707.5 730.2V742.2M709.5 730.2V742.2M702.4 737.5H712.9M702.4 737.1L697.4 742.2" stroke="#00ffff" stroke-width="1"/>
<circle shape-rendering="geometricPrecision" cx="697.4" cy="748.2" r="3.1" fill="#000" stroke="#ffffff" stroke-width="1.3"/><path d="M696.4 746.2V750.2M698.4 746.2V750.2" stroke="#ffffff" stroke-width=".8"/>
<circle cx="730.4" cy="708.4" r="11" stroke="#808080" stroke-width="1"/>
<path d="M736.5 696.9V708.9M738.5 696.9V708.9M740.5 696.9V708.9M742.5 696.9V708.9M735.4 703.5H745.9M735.4 703.8L730.4 708.9" stroke="#00ffff" stroke-width="1"/>
<circle shape-rendering="geometricPrecision" cx="730.4" cy="714.9" r="3.1" fill="#000" stroke="#ffffff" stroke-width="1.3"/><path d="M729.4 712.9V716.9M731.4 712.9V716.9" stroke="#ffffff" stroke-width=".8"/>
<circle cx="730.4" cy="741.7" r="11" stroke="#808080" stroke-width="1"/>
<path d="M736.5 730.2V742.2M738.5 730.2V742.2M740.5 730.2V742.2M742.5 730.2V742.2M735.4 737.5H745.9M735.4 737.1L730.4 742.2" stroke="#00ffff" stroke-width="1"/>
<circle shape-rendering="geometricPrecision" cx="730.4" cy="748.2" r="3.1" fill="#000" stroke="#ffffff" stroke-width="1.3"/><path d="M729.4 746.2V750.2M731.4 746.2V750.2" stroke="#ffffff" stroke-width=".8"/>
<path d="M681.5 708.5L686.5 708.5" stroke="#00ff00" stroke-width="1"/>
<path d="M681.5 741.5L712.5 741.5L712.5 708.5L708.5 708.5" stroke="#00ff00" stroke-width="1"/>
<path d="M671.5 724.5L697.5 724.5" stroke="#00ff00" stroke-width="1"/>
<path d="M697.5 688.5L697.5 697.5" stroke="#00ff00" stroke-width="1"/>
<path d="M697.5 719.5L697.5 730.5" stroke="#00ff00" stroke-width="1"/>
<path d="M712.5 721.5L770.5 721.5" stroke="#00ff00" stroke-width="1"/>
<path d="M770.5 721.5L770.5 724.5" stroke="#00ff00" stroke-width="1"/>
<rect x="740.5" y="719.5" width="3" height="4" stroke="#ffffff" stroke-width="1" fill="none"/>
<circle shape-rendering="geometricPrecision" cx="667.2" cy="724.9" r="1" fill="#00ff00" stroke="none"/>
<circle shape-rendering="geometricPrecision" cx="697.9" cy="724.9" r="1" fill="#00ff00" stroke="none"/>
<circle shape-rendering="geometricPrecision" cx="697.9" cy="689" r="1" fill="#00ff00" stroke="none"/>
</g>
<g id="bottom_mid">
<path d="M817.5 690.5H766.500Q762.5 690.5 762.5 694.500V754.500Q762.5 758.5 766.500 758.5H841.500Q845.5 758.5 845.5 754.500V695.500Q845.5 690.5 840.500 690.5H834.500Q830.5 690.5 830.5 694.5M817.5 690.5Q819.5 691 819.500 694.5" stroke="#ff0000" stroke-width="1" shape-rendering="geometricPrecision"/>
<rect x="778.5" y="712.5" width="22" height="36" stroke="#808080" stroke-width="1" fill="none"/>
<rect x="767.5" y="724.5" width="11" height="11" stroke="#808080" stroke-width="1" fill="none"/>
<rect x="771.5" y="727.5" width="6.600" height="6.600" fill="#ffffff" stroke="none"/><circle shape-rendering="geometricPrecision" cx="774.8" cy="730.8" r="2.200" fill="#000" stroke="none"/>
<rect x="787.2" y="727.5" width="6.600" height="6.600" fill="#ffffff" stroke="none"/><circle shape-rendering="geometricPrecision" cx="790.5" cy="730.8" r="2.200" fill="#000" stroke="none"/>
<rect x="821.2" y="727.5" width="6.600" height="6.600" fill="#ffffff" stroke="none"/><circle shape-rendering="geometricPrecision" cx="824.5" cy="730.8" r="2.200" fill="#000" stroke="none"/>
<path d="M781.5 688.5L781.5 712.5" stroke="#00ff00" stroke-width="1"/>
<circle shape-rendering="geometricPrecision" cx="782" cy="688.5" r="1" fill="#00ff00" stroke="none"/>
<path d="M789.5 685.5L789.5 712.5" stroke="#00ffff" stroke-width="1"/>
<path d="M770.5 685.5L770.5 693.5" stroke="#00ffff" stroke-width="1"/>
<circle shape-rendering="geometricPrecision" cx="770.8" cy="693.5" r="1.3" fill="#00ffff" stroke="none"/>
<path d="M807.5 700V712M809.5 700V712M811.5 700V712M813.5 700V712M815.5 700V712M805.5 707.5H817M805.5 707.2L800.5 712.5" stroke="#00ffff" stroke-width="1"/>
<path d="M783.5 712.3V723.7M785.5 712.3V723.7M787.5 712.3V723.7M789.5 712.3V723.7M791.5 712.3V723.7M783 719.5H795M783 719.4L778.5 724.5" stroke="#00ffff" stroke-width="1"/>
<path d="M752.5 734V746M754.5 734V746M756.5 734V746M758.5 734V746M760.5 734V746M752 740.5H763M763 740.3L767.5 735.5" stroke="#00ffff" stroke-width="1"/>
<path d="M783.5 746V758.8M785.5 746V758.8M787.5 746V758.8M789.5 746V758.8M791.5 746V758.8M783 753.5H795M783 753.1L778.5 748.5" stroke="#00ffff" stroke-width="1"/>
</g>
<g id="ucs">
<path d="M561.5 776.5V747.500M556.5 756L561.5 747.500L566.5 756M561.5 776.5H591.5M582 771.500L591.5 776.500L582 781.500" stroke="#ff00ff" stroke-width="1"/>
<path d="M544.5 771.5H555.500M549.5 765.5V777.500M555.5 771.5L561.5 776.5" stroke="#00ffff" stroke-width="1"/>
</g>
<g id="title">
<text x="651" y="802.5" fill="#ffff00" stroke="none" font-size="7.5" text-anchor="start" font-weight="bold" textLength="92" lengthAdjust="spacingAndGlyphs">陕西纺织城污水厂平面图1:300</text>
<path d="M652.5 807.5L744.5 807.5" stroke="#ffffff" stroke-width="1"/>
<path d="M652.5 809.5L744.5 809.5" stroke="#ffffff" stroke-width="1"/>
<text x="859.2" y="792" fill="#ffff00" stroke="none" font-size="7" text-anchor="start" font-weight="bold" textLength="12" lengthAdjust="spacingAndGlyphs">说明</text>
<text x="862" y="806.3" fill="#ffffff" stroke="none" font-size="6" text-anchor="start" font-weight="500" textLength="131" lengthAdjust="spacingAndGlyphs">1.图中尺寸均以米计，构筑物尺寸以内径尺寸计.</text>
<text x="862" y="822.6" fill="#ffffff" stroke="none" font-size="6" text-anchor="start" font-weight="500" textLength="173.5" lengthAdjust="spacingAndGlyphs">2.污水处理厂设计日处理为近期3.0万m[3]/d，远期6.0万m[3]/d.</text>
<text x="862" y="839.5" fill="#ffffff" stroke="none" font-size="6" text-anchor="start" font-weight="500" textLength="71" lengthAdjust="spacingAndGlyphs">2.污水处理厂占地22.17亩.</text>
</g>
<g id="legend">
<g shape-rendering="geometricPrecision"><path d="M1134.8 397.6L1147.5 388.2L1157.2 397.3" stroke="#ffffff" stroke-width="1"/><path d="M1134.8 397.9L1144.8 393.3L1155 396.8L1157.4 398.4V406L1152.3 402.7L1143.2 400.6L1136.7 399.5Z" fill="#ffffff" stroke="none"/><path d="M1156.1 392.2H1163.9V396.8L1166.1 397.3V400L1163.6 405.1H1160.9L1157.7 400Z" fill="#ffffff" stroke="none"/><path d="M1159.3 395.7L1161.8 393M1159.9 400.6L1163.1 403.8M1153.500 402.200L1155.500 400.500V403.500" stroke="#000" stroke-width="1"/></g>
<path d="M1157.5 381.5L1157.5 416.5" stroke="#00ffff" stroke-width="1"/>
<path d="M1130.5 398.5L1173.5 398.5" stroke="#00ffff" stroke-width="1"/>
<text x="1157.4" y="376.5" fill="#00ffff" stroke="none" font-size="7" text-anchor="middle" font-weight="500">N</text>
<circle cx="1157.9" cy="380.500" r="1.300" stroke="#00ffff" stroke-width=".9"/>
<rect x="1170" y="398" width="3" height="2" fill="#00ffff" stroke="none"/>
<text x="1121.5" y="432" fill="#ffff00" stroke="none" font-size="7" text-anchor="start" font-weight="bold">图</text>
<text x="1136" y="432" fill="#ffff00" stroke="none" font-size="7" text-anchor="start" font-weight="bold">例</text>
<path d="M1122.5 435.5L1145.5 435.5" stroke="#ffffff" stroke-width="1"/>
<path d="M1122.5 437.5L1145.5 437.5" stroke="#ffffff" stroke-width="1"/>
<path d="M1106.5 448.5L1154.5 448.5" stroke="#ff00ff" stroke-width="1"/>
<text x="1161.3" y="450.4" fill="#ffffff" stroke="none" font-size="6" text-anchor="start" font-weight="500" textLength="35.2" lengthAdjust="spacingAndGlyphs">工艺污水管线</text>
<path d="M1106.5 456.5L1154.5 456.5" stroke="#ff00ff" stroke-width="1"/>
<text x="1161.3" y="458.7" fill="#ffffff" stroke="none" font-size="6" text-anchor="start" font-weight="500" textLength="35.2" lengthAdjust="spacingAndGlyphs">污 泥 管 线</text>
<path d="M1106.5 465.5L1154.5 465.5" stroke="#ff00ff" stroke-width="1"/>
<text x="1161.3" y="467.7" fill="#ffffff" stroke="none" font-size="6" text-anchor="start" font-weight="500" textLength="35.2" lengthAdjust="spacingAndGlyphs">污 水 管 线</text>
<path d="M1106.5 474.5L1154.5 474.5" stroke="#ff00ff" stroke-width="1"/>
<text x="1161.3" y="476.5" fill="#ffffff" stroke="none" font-size="6" text-anchor="start" font-weight="500" textLength="35.2" lengthAdjust="spacingAndGlyphs">空 气 管 线</text>
<path d="M1106.5 483.5L1154.5 483.5" stroke="#ff00ff" stroke-width="1"/>
<text x="1161.3" y="485.7" fill="#ffffff" stroke="none" font-size="6" text-anchor="start" font-weight="500" textLength="35.2" lengthAdjust="spacingAndGlyphs">加 氯 管 线</text>
<path d="M1106.5 492.5L1154.5 492.5" stroke="#ff00ff" stroke-width="1"/>
<text x="1161.3" y="494.7" fill="#ffffff" stroke="none" font-size="6" text-anchor="start" font-weight="500" textLength="35.2" lengthAdjust="spacingAndGlyphs">厂区给水管线</text>
<path d="M1106.5 501.5L1154.5 501.5" stroke="#ff00ff" stroke-width="1"/>
<text x="1161.3" y="503.5" fill="#ffffff" stroke="none" font-size="6" text-anchor="start" font-weight="500" textLength="35.2" lengthAdjust="spacingAndGlyphs">超越污水管线</text>
<path d="M1106.5 510.5L1154.5 510.5" stroke="#ff00ff" stroke-width="1"/>
<text x="1161.3" y="512.5" fill="#ffffff" stroke="none" font-size="6" text-anchor="start" font-weight="500" textLength="35.2" lengthAdjust="spacingAndGlyphs">厂区雨水管线</text>
<path d="M1106.5 519.5L1154.5 519.5" stroke="#00ff00" stroke-width="1"/>
<circle shape-rendering="geometricPrecision" cx="1130.9" cy="519.9" r="1" fill="#00ff00" stroke="none"/>
<path d="M1147.500 526.900H1150.500V529.900H1147.500Z" fill="#ff00ff" stroke="none"/>
<path d="M1150.5 528.5L1153.5 528.5" stroke="#ff00ff" stroke-width="1"/>
<path d="M1106.5 537.5L1151.5 537.5" stroke="#00ffff" stroke-width="1"/>
<path d="M1129.5 532.5L1129.5 537.5" stroke="#00ffff" stroke-width="1"/>
<circle shape-rendering="geometricPrecision" cx="1130" cy="531.5" r="1.2" fill="#00ffff" stroke="none"/>
<text x="1164" y="521.7" fill="#ffffff" stroke="none" font-size="6" text-anchor="start" font-weight="500" textLength="30" lengthAdjust="spacingAndGlyphs">检 查 井</text>
<text x="1164" y="530.7" fill="#ffffff" stroke="none" font-size="6" text-anchor="start" font-weight="500" textLength="30" lengthAdjust="spacingAndGlyphs">雨 水 口</text>
<text x="1164" y="539.7" fill="#ffffff" stroke="none" font-size="6" text-anchor="start" font-weight="500" textLength="30" lengthAdjust="spacingAndGlyphs">消 火 栓</text>
</g>
<g id="table">
<text x="1133" y="563" fill="#ffff00" stroke="none" font-size="7" text-anchor="start" font-weight="bold" textLength="41.2" lengthAdjust="spacingAndGlyphs">构筑物一览表</text>
<path d="M1133.5 566.5L1175.5 566.5" stroke="#ffffff" stroke-width="1"/>
<path d="M1133.5 568.5L1175.5 568.5" stroke="#ffffff" stroke-width="1"/>
<rect x="1076.5" y="571.5" width="141" height="233" stroke="#ffffff" stroke-width="1" fill="none"/>
<path d="M1088.5 571.5L1088.5 804.5" stroke="#ffffff" stroke-width="1"/>
<path d="M1123.5 571.5L1123.5 804.5" stroke="#ffffff" stroke-width="1"/>
<path d="M1184.5 571.5L1184.5 804.5" stroke="#ffffff" stroke-width="1"/>
<path d="M1201.5 571.5L1201.5 804.5" stroke="#ffffff" stroke-width="1"/>
<path d="M1076.5 580.5L1217.5 580.5" stroke="#ffffff" stroke-width="1"/>
<path d="M1076.5 589.5L1217.5 589.5" stroke="#ffffff" stroke-width="1"/>
<path d="M1076.5 598.5L1217.5 598.5" stroke="#ffffff" stroke-width="1"/>
<path d="M1076.5 607.5L1217.5 607.5" stroke="#ffffff" stroke-width="1"/>
<path d="M1076.5 616.5L1217.5 616.5" stroke="#ffffff" stroke-width="1"/>
<path d="M1076.5 625.5L1217.5 625.5" stroke="#ffffff" stroke-width="1"/>
<path d="M1076.5 634.5L1217.5 634.5" stroke="#ffffff" stroke-width="1"/>
<path d="M1076.5 643.5L1217.5 643.5" stroke="#ffffff" stroke-width="1"/>
<path d="M1076.5 652.5L1217.5 652.5" stroke="#ffffff" stroke-width="1"/>
<path d="M1076.5 661.5L1217.5 661.5" stroke="#ffffff" stroke-width="1"/>
<path d="M1076.5 670.5L1217.5 670.5" stroke="#ffffff" stroke-width="1"/>
<path d="M1076.5 679.5L1217.5 679.5" stroke="#ffffff" stroke-width="1"/>
<path d="M1076.5 688.5L1217.5 688.5" stroke="#ffffff" stroke-width="1"/>
<path d="M1076.5 697.5L1217.5 697.5" stroke="#ffffff" stroke-width="1"/>
<path d="M1076.5 706.5L1217.5 706.5" stroke="#ffffff" stroke-width="1"/>
<path d="M1076.5 715.5L1217.5 715.5" stroke="#ffffff" stroke-width="1"/>
<path d="M1076.5 724.5L1217.5 724.5" stroke="#ffffff" stroke-width="1"/>
<path d="M1076.5 732.5L1217.5 732.5" stroke="#ffffff" stroke-width="1"/>
<path d="M1076.5 741.5L1217.5 741.5" stroke="#ffffff" stroke-width="1"/>
<path d="M1076.5 750.5L1217.5 750.5" stroke="#ffffff" stroke-width="1"/>
<path d="M1076.5 759.5L1217.5 759.5" stroke="#ffffff" stroke-width="1"/>
<path d="M1076.5 768.5L1217.5 768.5" stroke="#ffffff" stroke-width="1"/>
<path d="M1076.5 777.5L1217.5 777.5" stroke="#ffffff" stroke-width="1"/>
<path d="M1076.5 786.5L1217.5 786.5" stroke="#ffffff" stroke-width="1"/>
<path d="M1076.5 795.5L1217.5 795.5" stroke="#ffffff" stroke-width="1"/>
<text x="1077.2" y="578.3" fill="#ffffff" stroke="none" font-size="5.5" text-anchor="start" font-weight="500" textLength="10.5" lengthAdjust="spacingAndGlyphs">编号</text>
<text x="1094" y="578.3" fill="#ffffff" stroke="none" font-size="6" text-anchor="start" font-weight="500">名</text>
<text x="1109" y="578.3" fill="#ffffff" stroke="none" font-size="6" text-anchor="start" font-weight="500">称</text>
<text x="1131" y="578.3" fill="#ffffff" stroke="none" font-size="6" text-anchor="start" font-weight="500">规</text>
<text x="1146" y="578.3" fill="#ffffff" stroke="none" font-size="6" text-anchor="start" font-weight="500">格</text>
<text x="1186" y="578.3" fill="#ffffff" stroke="none" font-size="5.5" text-anchor="start" font-weight="500" textLength="13" lengthAdjust="spacingAndGlyphs">单位</text>
<text x="1203.5" y="578.3" fill="#ffffff" stroke="none" font-size="5.5" text-anchor="start" font-weight="500" textLength="12.5" lengthAdjust="spacingAndGlyphs">数量</text>
<circle shape-rendering="geometricPrecision" cx="1082.3" cy="584.9" r="2.900" stroke="#ffffff" stroke-width="1.100"/><path d="M1081.8 583.4V586.4" stroke="#ffffff" stroke-width=".8"/>
<text x="1089.5" y="586.1" fill="#ffffff" stroke="none" font-size="6" text-anchor="start" font-weight="500" textLength="17.4" lengthAdjust="spacingAndGlyphs">粗格栅</text>
<rect x="1130.5" y="582.5" width="29" height="5" stroke="#ffffff" stroke-width="1" fill="none"/>
<text x="1191.7" y="587.1" fill="#ffffff" stroke="none" font-size="5.5" text-anchor="middle" font-weight="500">座</text>
<rect x="1209.5" y="582.5" width="2" height="5" stroke="#ffffff" stroke-width="1" fill="none"/>
<circle shape-rendering="geometricPrecision" cx="1082.3" cy="593.9" r="2.900" stroke="#ffffff" stroke-width="1.100"/><path d="M1081.8 592.4V595.4" stroke="#ffffff" stroke-width=".8"/>
<text x="1089.5" y="595.1" fill="#ffffff" stroke="none" font-size="6" text-anchor="start" font-weight="500" textLength="23.2" lengthAdjust="spacingAndGlyphs">提升泵房</text>
<text x="1133" y="596.3" fill="#ffffff" stroke="none" font-size="6" text-anchor="start" font-weight="500" textLength="18" lengthAdjust="spacingAndGlyphs">见详图</text>
<text x="1191.7" y="596.1" fill="#ffffff" stroke="none" font-size="5.5" text-anchor="middle" font-weight="500">座</text>
<rect x="1209.5" y="591.5" width="2" height="5" stroke="#ffffff" stroke-width="1" fill="none"/>
<circle shape-rendering="geometricPrecision" cx="1082.3" cy="602.8" r="2.900" stroke="#ffffff" stroke-width="1.100"/><path d="M1081.8 601.3V604.3" stroke="#ffffff" stroke-width=".8"/>
<text x="1089.5" y="604" fill="#ffffff" stroke="none" font-size="6" text-anchor="start" font-weight="500" textLength="23.2" lengthAdjust="spacingAndGlyphs">细格栅间</text>
<text x="1133" y="605.2" fill="#ffffff" stroke="none" font-size="6" text-anchor="start" font-weight="500" textLength="18" lengthAdjust="spacingAndGlyphs">见详图</text>
<text x="1191.7" y="605" fill="#ffffff" stroke="none" font-size="5.5" text-anchor="middle" font-weight="500">座</text>
<rect x="1209.5" y="600.5" width="2" height="5" stroke="#ffffff" stroke-width="1" fill="none"/>
<circle shape-rendering="geometricPrecision" cx="1082.3" cy="611.8" r="2.900" stroke="#ffffff" stroke-width="1.100"/><path d="M1081.8 610.3V613.3" stroke="#ffffff" stroke-width=".8"/>
<text x="1089.5" y="613" fill="#ffffff" stroke="none" font-size="6" text-anchor="start" font-weight="500" textLength="23.2" lengthAdjust="spacingAndGlyphs">鼓风机房</text>
<text x="1133" y="614.2" fill="#ffffff" stroke="none" font-size="6" text-anchor="start" font-weight="500" textLength="18" lengthAdjust="spacingAndGlyphs">见详图</text>
<text x="1191.7" y="614" fill="#ffffff" stroke="none" font-size="5.5" text-anchor="middle" font-weight="500">座</text>
<rect x="1209.5" y="609.5" width="2" height="5" stroke="#ffffff" stroke-width="1" fill="none"/>
<circle shape-rendering="geometricPrecision" cx="1082.3" cy="620.8" r="2.900" stroke="#ffffff" stroke-width="1.100"/><path d="M1081.8 619.3V622.3" stroke="#ffffff" stroke-width=".8"/>
<text x="1089.5" y="622" fill="#ffffff" stroke="none" font-size="6" text-anchor="start" font-weight="500" textLength="29" lengthAdjust="spacingAndGlyphs">旋流沉砂池</text>
<rect x="1127.5" y="618.5" width="31" height="5" stroke="#ffffff" stroke-width="1" fill="none"/>
<text x="1191.7" y="623" fill="#ffffff" stroke="none" font-size="5.5" text-anchor="middle" font-weight="500">座</text>
<rect x="1209.5" y="618.5" width="2" height="5" stroke="#ffffff" stroke-width="1" fill="none"/>
<circle shape-rendering="geometricPrecision" cx="1082.3" cy="629.8" r="2.900" stroke="#ffffff" stroke-width="1.100"/><path d="M1081.8 628.3V631.3" stroke="#ffffff" stroke-width=".8"/>
<text x="1089.5" y="631" fill="#ffffff" stroke="none" font-size="6" text-anchor="start" font-weight="500" textLength="29" lengthAdjust="spacingAndGlyphs">CASS池</text>
<rect x="1127.5" y="627.5" width="34" height="5" stroke="#ffffff" stroke-width="1" fill="none"/>
<text x="1191.7" y="632" fill="#ffffff" stroke="none" font-size="5.5" text-anchor="middle" font-weight="500">座</text>
<rect x="1209.5" y="627.5" width="2" height="5" stroke="#ffffff" stroke-width="1" fill="none"/>
<circle shape-rendering="geometricPrecision" cx="1082.3" cy="638.7" r="2.900" stroke="#ffffff" stroke-width="1.100"/><path d="M1081.8 637.2V640.2" stroke="#ffffff" stroke-width=".8"/>
<text x="1089.5" y="639.9" fill="#ffffff" stroke="none" font-size="6" text-anchor="start" font-weight="500" textLength="17.4" lengthAdjust="spacingAndGlyphs">接触池</text>
<rect x="1127.5" y="636.5" width="34" height="5" stroke="#ffffff" stroke-width="1" fill="none"/>
<text x="1191.7" y="640.9" fill="#ffffff" stroke="none" font-size="5.5" text-anchor="middle" font-weight="500">座</text>
<rect x="1209.5" y="636.5" width="2" height="5" stroke="#ffffff" stroke-width="1" fill="none"/>
<circle shape-rendering="geometricPrecision" cx="1082.3" cy="647.7" r="2.900" stroke="#ffffff" stroke-width="1.100"/><path d="M1081.8 646.2V649.2" stroke="#ffffff" stroke-width=".8"/>
<text x="1089.5" y="648.9" fill="#ffffff" stroke="none" font-size="6" text-anchor="start" font-weight="500" textLength="29" lengthAdjust="spacingAndGlyphs">巴氏计量槽</text>
<rect x="1138.5" y="645.5" width="15" height="5" stroke="#ffffff" stroke-width="1" fill="none"/>
<text x="1191.7" y="649.9" fill="#ffffff" stroke="none" font-size="5.5" text-anchor="middle" font-weight="500">座</text>
<rect x="1209.5" y="645.5" width="2" height="5" stroke="#ffffff" stroke-width="1" fill="none"/>
<circle shape-rendering="geometricPrecision" cx="1082.3" cy="656.7" r="2.900" stroke="#ffffff" stroke-width="1.100"/><path d="M1081.8 655.2V658.2" stroke="#ffffff" stroke-width=".8"/>
<text x="1089.5" y="657.9" fill="#ffffff" stroke="none" font-size="6" text-anchor="start" font-weight="500" textLength="29" lengthAdjust="spacingAndGlyphs">污泥浓缩池</text>
<rect x="1127.5" y="654.5" width="34" height="5" stroke="#ffffff" stroke-width="1" fill="none"/>
<text x="1191.7" y="658.9" fill="#ffffff" stroke="none" font-size="5.5" text-anchor="middle" font-weight="500">座</text>
<rect x="1209.5" y="654.5" width="2" height="5" stroke="#ffffff" stroke-width="1" fill="none"/>
<circle shape-rendering="geometricPrecision" cx="1082.3" cy="665.7" r="2.900" stroke="#ffffff" stroke-width="1.100"/><path d="M1081.8 664.2V667.2" stroke="#ffffff" stroke-width=".8"/>
<text x="1089.5" y="666.9" fill="#ffffff" stroke="none" font-size="6" text-anchor="start" font-weight="500" textLength="17.4" lengthAdjust="spacingAndGlyphs">贮泥池</text>
<rect x="1130.5" y="663.5" width="29" height="5" stroke="#ffffff" stroke-width="1" fill="none"/>
<text x="1191.7" y="667.9" fill="#ffffff" stroke="none" font-size="5.5" text-anchor="middle" font-weight="500">座</text>
<rect x="1209.5" y="663.5" width="2" height="5" stroke="#ffffff" stroke-width="1" fill="none"/>
<circle shape-rendering="geometricPrecision" cx="1082.3" cy="674.6" r="2.900" stroke="#ffffff" stroke-width="1.100"/><path d="M1081.8 673.1V676.1" stroke="#ffffff" stroke-width=".8"/>
<text x="1089.5" y="675.8" fill="#ffffff" stroke="none" font-size="6" text-anchor="start" font-weight="500" textLength="29" lengthAdjust="spacingAndGlyphs">污泥脱水间</text>
<rect x="1130.5" y="672.5" width="35" height="5" stroke="#ffffff" stroke-width="1" fill="none"/>
<text x="1191.7" y="676.8" fill="#ffffff" stroke="none" font-size="5.5" text-anchor="middle" font-weight="500">座</text>
<rect x="1209.5" y="672.5" width="2" height="5" stroke="#ffffff" stroke-width="1" fill="none"/>
<circle shape-rendering="geometricPrecision" cx="1082.3" cy="683.6" r="2.900" stroke="#ffffff" stroke-width="1.100"/><path d="M1081.8 682.1V685.1" stroke="#ffffff" stroke-width=".8"/>
<text x="1089.5" y="684.8" fill="#ffffff" stroke="none" font-size="6" text-anchor="start" font-weight="500" textLength="17.4" lengthAdjust="spacingAndGlyphs">加氯间</text>
<rect x="1130.5" y="681.5" width="35" height="5" stroke="#ffffff" stroke-width="1" fill="none"/>
<text x="1191.7" y="685.8" fill="#ffffff" stroke="none" font-size="5.5" text-anchor="middle" font-weight="500">座</text>
<rect x="1209.5" y="681.5" width="2" height="5" stroke="#ffffff" stroke-width="1" fill="none"/>
<circle shape-rendering="geometricPrecision" cx="1082.3" cy="692.6" r="2.900" stroke="#ffffff" stroke-width="1.100"/><path d="M1081.8 691.1V694.1" stroke="#ffffff" stroke-width=".8"/>
<text x="1089.5" y="693.8" fill="#ffffff" stroke="none" font-size="6" text-anchor="start" font-weight="500" textLength="23.2" lengthAdjust="spacingAndGlyphs">鼓风机房</text>
<rect x="1130.5" y="690.5" width="35" height="5" stroke="#ffffff" stroke-width="1" fill="none"/>
<text x="1191.7" y="694.8" fill="#ffffff" stroke="none" font-size="5.5" text-anchor="middle" font-weight="500">座</text>
<rect x="1209.5" y="690.5" width="2" height="5" stroke="#ffffff" stroke-width="1" fill="none"/>
<circle shape-rendering="geometricPrecision" cx="1082.3" cy="701.6" r="2.900" stroke="#ffffff" stroke-width="1.100"/><path d="M1081.8 700.1V703.1" stroke="#ffffff" stroke-width=".8"/>
<text x="1089.5" y="702.8" fill="#ffffff" stroke="none" font-size="6" text-anchor="start" font-weight="500" textLength="11.6" lengthAdjust="spacingAndGlyphs">车库</text>
<path d="M1191.5 704.5V700.5H1194.500V704.5M1196.5 698.5V702.5H1194.500" stroke="#ffffff" stroke-width="1"/>
<rect x="1205.5" y="699.5" width="9" height="5" stroke="#ffffff" stroke-width="1" fill="none"/>
<circle shape-rendering="geometricPrecision" cx="1082.3" cy="710.6" r="2.900" stroke="#ffffff" stroke-width="1.100"/><path d="M1081.8 709.1V712.1" stroke="#ffffff" stroke-width=".8"/>
<text x="1089.5" y="711.8" fill="#ffffff" stroke="none" font-size="6" text-anchor="start" font-weight="500" textLength="17.4" lengthAdjust="spacingAndGlyphs">维修间</text>
<path d="M1191.5 713.5V709.5H1194.500V713.5M1196.5 707.5V711.5H1194.500" stroke="#ffffff" stroke-width="1"/>
<rect x="1205.5" y="708.5" width="9" height="5" stroke="#ffffff" stroke-width="1" fill="none"/>
<circle shape-rendering="geometricPrecision" cx="1082.3" cy="719.5" r="2.900" stroke="#ffffff" stroke-width="1.100"/><path d="M1081.8 718V721" stroke="#ffffff" stroke-width=".8"/>
<text x="1089.5" y="720.7" fill="#ffffff" stroke="none" font-size="6" text-anchor="start" font-weight="500" textLength="11.6" lengthAdjust="spacingAndGlyphs">仓库</text>
<path d="M1191.5 722.5V718.5H1194.500V722.5M1196.5 716.5V720.5H1194.500" stroke="#ffffff" stroke-width="1"/>
<rect x="1205.5" y="717.5" width="9" height="5" stroke="#ffffff" stroke-width="1" fill="none"/>
<circle shape-rendering="geometricPrecision" cx="1082.3" cy="728.5" r="2.900" stroke="#ffffff" stroke-width="1.100"/><path d="M1081.8 727V730" stroke="#ffffff" stroke-width=".8"/>
<text x="1089.5" y="729.7" fill="#ffffff" stroke="none" font-size="6" text-anchor="start" font-weight="500" textLength="29" lengthAdjust="spacingAndGlyphs">综合办公楼</text>
<path d="M1191.5 731.5V727.5H1194.500V731.5M1196.5 725.5V729.5H1194.500" stroke="#ffffff" stroke-width="1"/>
<rect x="1205.5" y="726.5" width="10" height="5" stroke="#ffffff" stroke-width="1" fill="none"/>
<circle shape-rendering="geometricPrecision" cx="1082.3" cy="737.5" r="2.900" stroke="#ffffff" stroke-width="1.100"/><path d="M1081.8 736V739" stroke="#ffffff" stroke-width=".8"/>
<text x="1089.5" y="738.7" fill="#ffffff" stroke="none" font-size="6" text-anchor="start" font-weight="500" textLength="11.6" lengthAdjust="spacingAndGlyphs">食堂</text>
<path d="M1191.5 739.5V735.5H1194.500V739.5M1196.5 733.5V737.5H1194.500" stroke="#ffffff" stroke-width="1"/>
<rect x="1205.5" y="734.5" width="9" height="5" stroke="#ffffff" stroke-width="1" fill="none"/>
<circle shape-rendering="geometricPrecision" cx="1082.3" cy="746.5" r="2.900" stroke="#ffffff" stroke-width="1.100"/><path d="M1081.8 745V748" stroke="#ffffff" stroke-width=".8"/>
<text x="1089.5" y="747.7" fill="#ffffff" stroke="none" font-size="6" text-anchor="start" font-weight="500" textLength="29" lengthAdjust="spacingAndGlyphs">传达室门卫</text>
<path d="M1191.5 748.5V744.5H1194.500V748.5M1196.5 742.5V746.5H1194.500" stroke="#ffffff" stroke-width="1"/>
<rect x="1205.5" y="743.5" width="9" height="5" stroke="#ffffff" stroke-width="1" fill="none"/>
<circle shape-rendering="geometricPrecision" cx="1082.3" cy="755.4" r="2.900" stroke="#ffffff" stroke-width="1.100"/><path d="M1081.8 753.9V756.9" stroke="#ffffff" stroke-width=".8"/>
<text x="1089.5" y="756.6" fill="#ffffff" stroke="none" font-size="6" text-anchor="start" font-weight="500" textLength="17.4" lengthAdjust="spacingAndGlyphs">配电间</text>
<path d="M1191.5 757.5V753.5H1194.500V757.5M1196.5 751.5V755.5H1194.500" stroke="#ffffff" stroke-width="1"/>
<rect x="1205.5" y="752.5" width="9" height="5" stroke="#ffffff" stroke-width="1" fill="none"/>
<circle shape-rendering="geometricPrecision" cx="1082.3" cy="764.4" r="2.900" stroke="#ffffff" stroke-width="1.100"/><path d="M1081.8 762.9V765.9" stroke="#ffffff" stroke-width=".8"/>
<text x="1089.5" y="765.6" fill="#ffffff" stroke="none" font-size="6" text-anchor="start" font-weight="500" textLength="17.4" lengthAdjust="spacingAndGlyphs">锅炉间</text>
<path d="M1191.5 766.5V762.5H1194.500V766.5M1196.5 760.5V764.5H1194.500" stroke="#ffffff" stroke-width="1"/>
<rect x="1205.5" y="761.5" width="9" height="5" stroke="#ffffff" stroke-width="1" fill="none"/>
<circle shape-rendering="geometricPrecision" cx="1082.3" cy="773.4" r="2.900" stroke="#ffffff" stroke-width="1.100"/><path d="M1081.8 771.9V774.9" stroke="#ffffff" stroke-width=".8"/>
<text x="1089.5" y="774.6" fill="#ffffff" stroke="none" font-size="6" text-anchor="start" font-weight="500" textLength="11.6" lengthAdjust="spacingAndGlyphs">浴池</text>
<path d="M1191.5 775.5V771.5H1194.500V775.5M1196.5 769.5V773.5H1194.500" stroke="#ffffff" stroke-width="1"/>
<circle shape-rendering="geometricPrecision" cx="1082.3" cy="782.4" r="2.900" stroke="#ffffff" stroke-width="1.100"/><path d="M1081.8 780.9V783.9" stroke="#ffffff" stroke-width=".8"/>
<text x="1089.5" y="783.6" fill="#ffffff" stroke="none" font-size="6" text-anchor="start" font-weight="500" textLength="17.4" lengthAdjust="spacingAndGlyphs">自行车</text>
<path d="M1191.5 784.5V780.5H1194.500V784.5M1196.5 778.5V782.5H1194.500" stroke="#ffffff" stroke-width="1"/>
<rect x="1207.5" y="779.5" width="5" height="6" stroke="#ffffff" stroke-width="1" fill="none"/>
<circle shape-rendering="geometricPrecision" cx="1082.3" cy="791.3" r="2.900" stroke="#ffffff" stroke-width="1.100"/><path d="M1081.8 789.8V792.8" stroke="#ffffff" stroke-width=".8"/>
<text x="1089.5" y="792.5" fill="#ffffff" stroke="none" font-size="6" text-anchor="start" font-weight="500" textLength="11.6" lengthAdjust="spacingAndGlyphs">绿化</text>
<circle shape-rendering="geometricPrecision" cx="1082.3" cy="800.3" r="2.900" stroke="#ffffff" stroke-width="1.100"/><path d="M1081.8 798.8V801.8" stroke="#ffffff" stroke-width=".8"/>
<text x="1089.5" y="801.5" fill="#ffffff" stroke="none" font-size="6" text-anchor="start" font-weight="500" textLength="11.6" lengthAdjust="spacingAndGlyphs">道路</text>
</g>
<g id="titleblock">
<rect x="1081.5" y="825.5" width="161" height="36" stroke="#ffffff" stroke-width="1" fill="none"/>
<path d="M1081.5 840.5L1242.5 840.5" stroke="#ff00ff" stroke-width="1"/>
<path d="M1163.5 825.5L1163.5 840.5" stroke="#ff00ff" stroke-width="1"/>
<path d="M1191.5 825.5L1191.5 840.5" stroke="#ff00ff" stroke-width="1"/>
<path d="M1081.5 847.5L1147.5 847.5" stroke="#ff00ff" stroke-width="1"/>
<path d="M1210.5 847.5L1242.5 847.5" stroke="#ff00ff" stroke-width="1"/>
<path d="M1081.5 854.5L1147.5 854.5" stroke="#ff00ff" stroke-width="1"/>
<path d="M1210.5 854.5L1242.5 854.5" stroke="#ff00ff" stroke-width="1"/>
<path d="M1099.5 840.5L1099.5 861.5" stroke="#ff00ff" stroke-width="1"/>
<path d="M1115.5 840.5L1115.5 861.5" stroke="#ff00ff" stroke-width="1"/>
<path d="M1131.5 840.5L1131.5 861.5" stroke="#ff00ff" stroke-width="1"/>
<path d="M1147.5 840.5L1147.5 861.5" stroke="#ff00ff" stroke-width="1"/>
<path d="M1210.5 840.5L1210.5 861.5" stroke="#ff00ff" stroke-width="1"/>
<path d="M1225.5 840.5L1225.5 861.5" stroke="#ff00ff" stroke-width="1"/>
<rect x="1094.5" y="827.5" width="16" height="5" stroke="#ffffff" stroke-width="1" fill="none"/>
<rect x="1094.5" y="833.5" width="17" height="4" stroke="#ffffff" stroke-width="1" fill="none"/>
<rect x="1112.5" y="830.5" width="49" height="5" stroke="#ffffff" stroke-width="1" fill="none"/>
<rect x="1165.5" y="831.5" width="23" height="4" stroke="#ffffff" stroke-width="1" fill="none"/>
<rect x="1195.5" y="831.5" width="43" height="4" stroke="#ffffff" stroke-width="1" fill="none"/>
<rect x="1167.5" y="847.5" width="26" height="5" stroke="#ffffff" stroke-width="1" fill="none"/>
<rect x="1133.5" y="841.5" width="14" height="4" stroke="#ffffff" stroke-width="1" fill="none"/>
<rect x="1137.5" y="855.5" width="6" height="4" stroke="#ffffff" stroke-width="1" fill="none"/>
<rect x="1229.5" y="841.5" width="10" height="4" stroke="#ffffff" stroke-width="1" fill="none"/>
<rect x="1230.5" y="856.5" width="5" height="3" stroke="#ffffff" stroke-width="1" fill="none"/>
<rect x="1213.5" y="848.5" width="10" height="4" stroke="#ffffff" stroke-width="1" fill="none"/>
<rect x="1084.5" y="841.5" width="14" height="4" stroke="#ffffff" stroke-width="1" fill="none"/>
<rect x="1118.5" y="841.5" width="11" height="4" stroke="#ffffff" stroke-width="1" fill="none"/>
<rect x="1084.5" y="848.5" width="14" height="4" stroke="#ffffff" stroke-width="1" fill="none"/>
<rect x="1118.5" y="848.5" width="11" height="4" stroke="#ffffff" stroke-width="1" fill="none"/>
<rect x="1084.5" y="855.5" width="14" height="4" stroke="#ffffff" stroke-width="1" fill="none"/>
<rect x="1118.5" y="855.5" width="11" height="4" stroke="#ffffff" stroke-width="1" fill="none"/>
<rect x="1213.5" y="841.5" width="10" height="4" stroke="#ffffff" stroke-width="1" fill="none"/>
<rect x="1213.5" y="855.5" width="10" height="4" stroke="#ffffff" stroke-width="1" fill="none"/>
<circle shape-rendering="geometricPrecision" cx="1088.2" cy="832.8" r="4" fill="#ffffff" stroke="none"/><circle shape-rendering="geometricPrecision" cx="1087" cy="829.500" r="1.500" fill="#ffffff" stroke="none"/>
</g><g id="valves"><rect x="605.5" y="398.5" width="2" height="4" fill="#000" stroke="#ff00ff" stroke-width="1"/><rect x="644.5" y="398.5" width="2" height="4" fill="#000" stroke="#ff00ff" stroke-width="1"/><rect x="615.5" y="452.5" width="2" height="4" fill="#000" stroke="#ff00ff" stroke-width="1"/><rect x="652.5" y="452.5" width="2" height="4" fill="#000" stroke="#ff00ff" stroke-width="1"/><rect x="570.5" y="482.5" width="2" height="4" fill="#000" stroke="#ff00ff" stroke-width="1"/><rect x="570.5" y="565.5" width="2" height="4" fill="#000" stroke="#ff00ff" stroke-width="1"/><rect x="569.5" y="621.5" width="2" height="4" fill="#000" stroke="#ff00ff" stroke-width="1"/><rect x="570.5" y="725.5" width="2" height="4" fill="#000" stroke="#ff00ff" stroke-width="1"/><rect x="576.5" y="508.5" width="2" height="4" fill="#000" stroke="#ffffff" stroke-width="1"/><rect x="573.5" y="515.5" width="2" height="4" fill="#000" stroke="#ffffff" stroke-width="1"/><rect x="581.5" y="524.5" width="2" height="4" fill="#000" stroke="#ffffff" stroke-width="1"/><rect x="581.5" y="607.5" width="2" height="4" fill="#000" stroke="#ffffff" stroke-width="1"/><rect x="576.5" y="619.5" width="2" height="4" fill="#000" stroke="#ffffff" stroke-width="1"/><rect x="573.5" y="631.5" width="2" height="4" fill="#000" stroke="#ffffff" stroke-width="1"/><rect x="581.5" y="713.5" width="2" height="4" fill="#000" stroke="#ffffff" stroke-width="1"/><rect x="616.5" y="423.5" width="2" height="4" fill="#000" stroke="#ffffff" stroke-width="1"/><rect x="573.5" y="440.5" width="2" height="4" fill="#000" stroke="#ffffff" stroke-width="1"/><rect x="582.5" y="440.5" width="2" height="4" fill="#000" stroke="#ffffff" stroke-width="1"/><rect x="613.5" y="467.5" width="2" height="4" fill="#000" stroke="#ffffff" stroke-width="1"/><rect x="648.5" y="465.5" width="2" height="4" fill="#000" stroke="#ffffff" stroke-width="1"/><rect x="656.5" y="470.5" width="2" height="4" fill="#000" stroke="#ffffff" stroke-width="1"/><rect x="716.5" y="470.5" width="2" height="4" fill="#000" stroke="#ffffff" stroke-width="1"/><rect x="587.5" y="455.5" width="2" height="4" fill="#000" stroke="#ffffff" stroke-width="1"/><rect x="622.5" y="458.5" width="2" height="4" fill="#000" stroke="#ffffff" stroke-width="1"/><rect x="646.5" y="455.5" width="2" height="4" fill="#000" stroke="#ffffff" stroke-width="1"/><rect x="655.5" y="458.5" width="2" height="4" fill="#000" stroke="#ffffff" stroke-width="1"/><rect x="704.5" y="455.5" width="2" height="4" fill="#000" stroke="#ffffff" stroke-width="1"/><rect x="714.5" y="458.5" width="2" height="4" fill="#000" stroke="#ffffff" stroke-width="1"/><rect x="670.5" y="400.5" width="2" height="4" fill="#000" stroke="#ffffff" stroke-width="1"/><rect x="728.5" y="442.5" width="2" height="4" fill="#000" stroke="#ffffff" stroke-width="1"/><rect x="630.5" y="439.5" width="2" height="4" fill="#000" stroke="#ffffff" stroke-width="1"/><rect x="633.5" y="439.5" width="2" height="4" fill="#000" stroke="#ffffff" stroke-width="1"/><rect x="604.5" y="662.5" width="2" height="4" fill="#000" stroke="#ffffff" stroke-width="1"/><rect x="638.5" y="662.5" width="2" height="4" fill="#000" stroke="#ffffff" stroke-width="1"/><rect x="673.5" y="662.5" width="2" height="4" fill="#000" stroke="#ffffff" stroke-width="1"/><rect x="706.5" y="662.5" width="2" height="4" fill="#000" stroke="#ffffff" stroke-width="1"/><rect x="655.5" y="666.5" width="2" height="4" fill="#000" stroke="#ffffff" stroke-width="1"/><rect x="605.5" y="673.5" width="2" height="4" fill="#000" stroke="#ffffff" stroke-width="1"/><rect x="636.5" y="680.5" width="2" height="4" fill="#000" stroke="#ff00ff" stroke-width="1"/><rect x="717.5" y="680.5" width="2" height="4" fill="#000" stroke="#ff00ff" stroke-width="1"/><rect x="783.5" y="680.5" width="2" height="4" fill="#000" stroke="#ff00ff" stroke-width="1"/><rect x="849.5" y="680.5" width="2" height="4" fill="#000" stroke="#ff00ff" stroke-width="1"/><rect x="596.5" y="683.5" width="2" height="4" fill="#000" stroke="#ffffff" stroke-width="1"/><rect x="653.5" y="683.5" width="2" height="4" fill="#000" stroke="#ffffff" stroke-width="1"/><rect x="733.5" y="683.5" width="2" height="4" fill="#000" stroke="#ffffff" stroke-width="1"/><rect x="815.5" y="683.5" width="2" height="4" fill="#000" stroke="#ffffff" stroke-width="1"/><rect x="641.5" y="686.5" width="2" height="4" fill="#000" stroke="#ffffff" stroke-width="1"/><rect x="710.5" y="686.5" width="2" height="4" fill="#000" stroke="#ffffff" stroke-width="1"/><rect x="751.5" y="686.5" width="2" height="4" fill="#000" stroke="#ffffff" stroke-width="1"/><rect x="801.5" y="398.5" width="2" height="4" fill="#000" stroke="#ff00ff" stroke-width="1"/><rect x="909.5" y="398.5" width="2" height="4" fill="#000" stroke="#ff00ff" stroke-width="1"/><rect x="801.5" y="452.5" width="2" height="4" fill="#000" stroke="#ff00ff" stroke-width="1"/><rect x="881.5" y="438.5" width="2" height="4" fill="#000" stroke="#ffffff" stroke-width="1"/><rect x="886.5" y="437.5" width="2" height="4" fill="#000" stroke="#ff00ff" stroke-width="1"/><rect x="884.5" y="492.5" width="2" height="4" fill="#000" stroke="#ffffff" stroke-width="1"/><rect x="881.5" y="506.5" width="2" height="4" fill="#000" stroke="#ffffff" stroke-width="1"/><rect x="886.5" y="506.5" width="2" height="4" fill="#000" stroke="#ff00ff" stroke-width="1"/><rect x="884.5" y="544.5" width="2" height="4" fill="#000" stroke="#ffffff" stroke-width="1"/><rect x="884.5" y="596.5" width="2" height="4" fill="#000" stroke="#ffffff" stroke-width="1"/><rect x="886.5" y="582.5" width="2" height="4" fill="#000" stroke="#ff00ff" stroke-width="1"/><rect x="886.5" y="634.5" width="2" height="4" fill="#000" stroke="#ff00ff" stroke-width="1"/><rect x="884.5" y="654.5" width="2" height="4" fill="#000" stroke="#ffffff" stroke-width="1"/><rect x="897.5" y="455.5" width="2" height="4" fill="#000" stroke="#ffffff" stroke-width="1"/><rect x="948.5" y="455.5" width="2" height="4" fill="#000" stroke="#ffffff" stroke-width="1"/><rect x="767.5" y="458.5" width="2" height="4" fill="#000" stroke="#ffffff" stroke-width="1"/><rect x="834.5" y="458.5" width="2" height="4" fill="#000" stroke="#ffffff" stroke-width="1"/><rect x="746.5" y="454.5" width="2" height="6" fill="#ffffff" stroke="none"/><rect x="811.5" y="454.5" width="2" height="6" fill="#ffffff" stroke="none"/><rect x="986.5" y="527.5" width="2" height="4" fill="#000" stroke="#ffffff" stroke-width="1"/><rect x="895.5" y="518.5" width="2" height="4" fill="#000" stroke="#ff00ff" stroke-width="1"/><rect x="897.5" y="557.5" width="2" height="4" fill="#000" stroke="#ffffff" stroke-width="1"/><rect x="906.5" y="555.5" width="2" height="4" fill="#000" stroke="#ffffff" stroke-width="1"/><rect x="933.5" y="556.5" width="2" height="6" fill="#ffffff" stroke="none"/><rect x="953.5" y="555.5" width="2" height="4" fill="#000" stroke="#ffffff" stroke-width="1"/><rect x="605.5" y="752.5" width="2" height="4" fill="#000" stroke="#ffffff" stroke-width="1"/><rect x="641.5" y="692.5" width="2" height="4" fill="#000" stroke="#ffffff" stroke-width="1"/><rect x="659.5" y="713.5" width="2" height="4" fill="#000" stroke="#ffffff" stroke-width="1"/><rect x="668.5" y="729.5" width="2" height="4" fill="#000" stroke="#ffffff" stroke-width="1"/><rect x="666.5" y="709.5" width="2" height="4" fill="#000" stroke="#ffffff" stroke-width="1"/><rect x="620.5" y="759.5" width="2" height="4" fill="#000" stroke="#ff00ff" stroke-width="1"/><rect x="707.5" y="759.5" width="2" height="4" fill="#000" stroke="#ff00ff" stroke-width="1"/><rect x="802.5" y="759.5" width="2" height="4" fill="#000" stroke="#ff00ff" stroke-width="1"/><rect x="680.5" y="696.5" width="2" height="4" fill="#000" stroke="#ffffff" stroke-width="1"/><rect x="681.5" y="729.5" width="2" height="4" fill="#000" stroke="#ffffff" stroke-width="1"/><rect x="1129.5" y="446.5" width="2" height="4" fill="#000" stroke="#ffffff" stroke-width="1"/><rect x="1129.5" y="454.5" width="2" height="4" fill="#000" stroke="#ffffff" stroke-width="1"/><rect x="1129.5" y="463.5" width="2" height="4" fill="#000" stroke="#ffffff" stroke-width="1"/><rect x="1129.5" y="472.5" width="2" height="4" fill="#000" stroke="#ffffff" stroke-width="1"/><rect x="1129.5" y="481.5" width="2" height="4" fill="#000" stroke="#ffffff" stroke-width="1"/><rect x="1129.5" y="490.5" width="2" height="4" fill="#000" stroke="#ffffff" stroke-width="1"/><rect x="1129.5" y="498.5" width="2" height="6" fill="#ffffff" stroke="none"/><rect x="1129.5" y="508.5" width="2" height="4" fill="#000" stroke="#ffffff" stroke-width="1"/></g></svg></div>
</body></html>
